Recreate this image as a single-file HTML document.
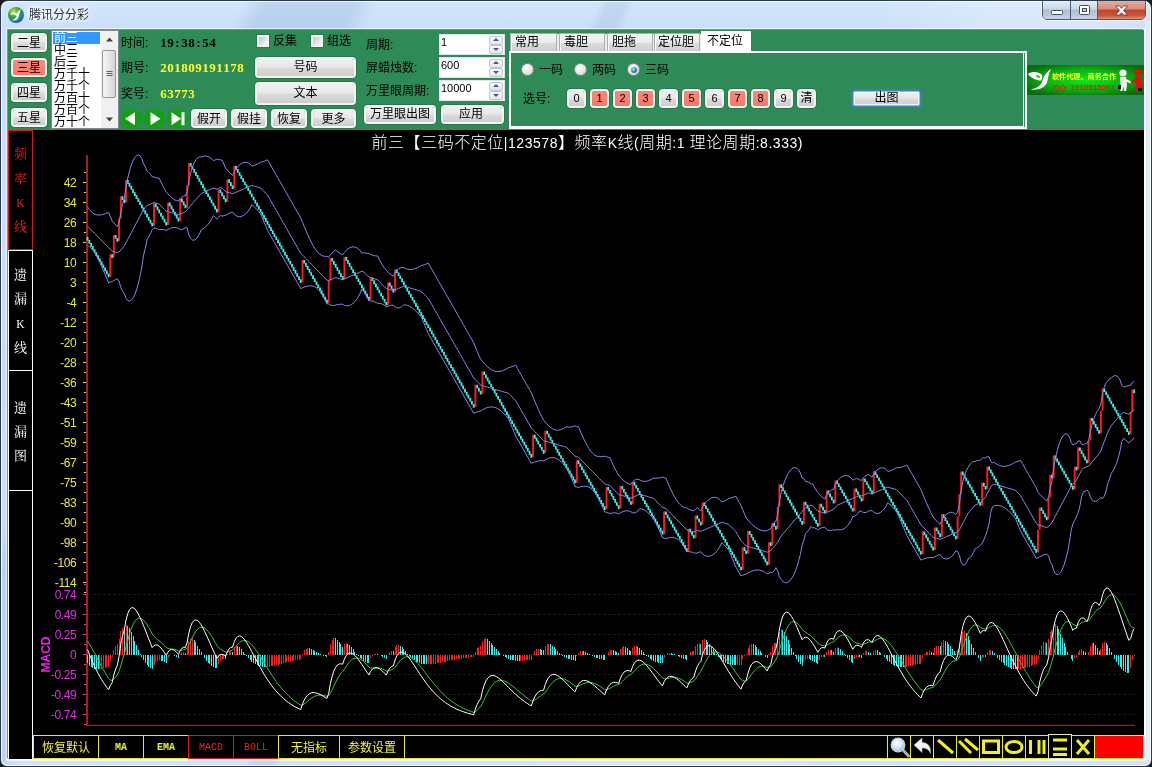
<!DOCTYPE html>
<html lang="zh-CN">
<head>
<meta charset="utf-8">
<title>腾讯分分彩</title>
<style>
html,body{margin:0;padding:0;}
body{width:1152px;height:767px;overflow:hidden;background:#1b1b1b;position:relative;
 font-family:"Liberation Sans","Noto Sans CJK SC",sans-serif;font-size:12px;color:#000;}
.abs,.win *{position:absolute;box-sizing:border-box;}
.win{will-change:transform;box-sizing:border-box;position:absolute;left:0;top:0;width:1152px;height:767px;border-radius:8px 8px 7px 7px;
 border:1px solid #2b3a4d;overflow:hidden;
 background:
  linear-gradient(115deg,rgba(120,160,205,0) 0,rgba(120,160,205,0) 220px,rgba(120,160,205,.24) 240px,rgba(120,160,205,.24) 322px,rgba(120,160,205,0) 342px,rgba(120,160,205,0) 543px,rgba(120,160,205,.2) 552px,rgba(120,160,205,.2) 566px,rgba(120,160,205,0) 576px,rgba(255,255,255,0) 800px,rgba(255,255,255,.22) 900px,rgba(255,255,255,.22) 1000px,rgba(255,255,255,0) 1060px),
  linear-gradient(180deg,#d3e6fb 0,#c9dff7 30px,#c7defa 400px,#d2e5fb 767px);
 box-shadow:inset 0 0 0 1px rgba(255,255,255,.85);}
.client{left:7px;top:29px;width:1136px;height:729px;background:#000;box-shadow:-1px -1px 0 0 rgba(75,95,115,.7),1px 1px 0 0 #fff,0 0 0 2px rgba(255,255,255,.6);}
.ttl{left:28px;top:5px;height:18px;line-height:18px;font-size:12px;color:#27303c;white-space:nowrap;
 text-shadow:0 0 6px #fff,0 0 6px #fff,0 0 8px #fff,0 0 3px #fff;}
.cap{left:1041px;top:-1px;width:104px;height:20px;border:1px solid #4c5b70;border-radius:0 0 5px 5px;overflow:hidden;
 box-shadow:0 0 0 1px rgba(255,255,255,.6);}
.cap div{top:0;height:18px;}
.cmin{left:0;width:28px;border-right:1px solid #4c5b70;background:linear-gradient(180deg,#e4edf7 0,#c9d7e8 45%,#aebfd4 50%,#c3d2e3 100%);}
.cmax{left:28px;width:27px;border-right:1px solid #4c5b70;background:linear-gradient(180deg,#e4edf7 0,#c9d7e8 45%,#aebfd4 50%,#c3d2e3 100%);}
.ccls{left:55px;width:47px;background:linear-gradient(180deg,#e4ada0 0,#d88b7a 45%,#c0432d 50%,#c8553e 80%,#dc8f78 100%);}
.green{left:7px;top:29px;width:1136px;height:100px;background:#2e8b57;}
.btn{border:2px solid #f3f3f3;border-radius:4px;text-align:center;font-size:12px;white-space:nowrap;
 background:linear-gradient(180deg,#f0f0f0 0,#e8e8e8 45%,#dadada 55%,#cecece 100%);background-clip:padding-box;
 box-shadow:0 0 0 1px rgba(30,70,50,.28);color:#000;}
.btn.sal{background:linear-gradient(180deg,#fb8677 0,#fa8072 60%,#f47868 100%);background-clip:padding-box;}
.lbl{white-space:nowrap;font-size:12px;line-height:14px;color:#000;}
.num{font-family:"Liberation Serif","Noto Serif CJK SC",serif;font-weight:bold;font-size:13px;line-height:14px;white-space:nowrap;height:14px;}
.num b{position:static;display:inline-block;width:7px;text-align:center;}
.list{left:50px;top:29px;width:68px;height:99px;background:#fff;border:1px solid #7b8a92;overflow:hidden;}
.list .it{left:1px;width:47px;height:12px;line-height:12px;font-size:12px;padding-left:1px;white-space:nowrap;}
.chk{width:12px;height:12px;border:2px solid #f1f1f1;background:linear-gradient(135deg,#c4c8cc,#eef0f2 80%);box-shadow:0 0 0 1px rgba(30,70,50,.25);}
.spin{width:66px;height:21px;background:#fff;border:1px solid #dfe5e8;font-size:11px;line-height:15px;padding-left:1px;}
.spin i{right:1px;width:14px;height:9px;border:1px solid #c0c4cc;border-radius:2px;background:linear-gradient(#fafafa,#e4e6ea);}
.spin i.u{top:1px}.spin i.d{top:10px}
.spin i:after{content:"";position:absolute;left:3px;border:3px solid transparent;}
.spin i.u:after{top:-2px;border-bottom-color:#3a5a9a;}
.spin i.d:after{top:2px;border-top-color:#3a5a9a;}
.tab{top:32px;height:18px;border:1px solid #a9b0ad;border-bottom:none;box-shadow:inset 1px 1px 0 #fafafa;font-size:12px;line-height:17px;padding-left:4px;white-space:nowrap;
 background:linear-gradient(180deg,#f4f4f4 0,#ebebeb 50%,#dcdcdc 52%,#cfcfcf 100%);}
.tab.sel{top:30px;height:21px;background:#fff;border-color:#fff;line-height:19px;padding-left:5px;box-shadow:none;}
.panel{left:508px;top:50px;width:518px;height:78px;border:2px solid #fff;background:#2e8b57;}
.radio{width:13px;height:13px;border-radius:50%;border:1px solid #8e8f8f;background:radial-gradient(circle at 40% 35%,#fdfdfd 0,#e4e4e4 55%,#c8c8c8 100%);}
.radio.on:after{content:"";position:absolute;left:2.5px;top:2.5px;width:6px;height:6px;border-radius:50%;background:radial-gradient(circle at 40% 35%,#a8e4f4 0,#2a7fb5 55%,#184c7e 100%);}
.nb{top:88px;width:19px;height:19px;line-height:15px;font-size:11px;}
.ltab{left:7px;width:25px;height:120px;border:1px solid #fff;border-left-color:#fff;color:#fff;
 font-family:"Liberation Serif","Noto Serif CJK SC",serif;font-size:13px;text-align:center;}
.ltab span{left:0;width:23px;height:14px;line-height:14px;}
.ltab.red{border-color:#c81e1e;color:#f02020;}
.tb{top:734px;height:24px;border:1px solid #e6e640;color:#f0f040;text-align:center;line-height:24px;font-size:12px;white-space:nowrap;}
.tb.ser{font-family:"Liberation Mono",monospace;font-size:10px;font-weight:bold;line-height:23px;}
.tb.red{border-color:#e01818;color:#f02020;font-weight:normal;}
.ic{top:735px;width:24px;height:24px;border:1px solid #e6e640;}
svg text.yl{font-family:"Liberation Sans",sans-serif;font-size:12px;letter-spacing:-.45px;fill:#e8e838;}
svg text.ml{font-family:"Liberation Sans",sans-serif;font-size:12px;letter-spacing:-.45px;fill:#e030e0;}
svg text.macd{font-family:"Liberation Sans",sans-serif;font-size:12px;font-weight:bold;fill:#f020f0;}
svg text.ct{font-family:"Liberation Sans","Noto Sans CJK SC",sans-serif;font-size:16px;font-weight:300;fill:#fff;}
svg text.ct .la{font-size:14px;font-weight:400;}
</style>
</head>
<body>
<div class="win">
 <!-- title bar -->
 <svg style="left:6px;top:5px" width="18" height="18" viewBox="0 0 18 18">
  <defs><radialGradient id="ig" cx="35%" cy="30%" r="75%"><stop offset="0" stop-color="#b6e86a"/><stop offset=".45" stop-color="#3aa82a"/><stop offset=".8" stop-color="#1f78b8"/><stop offset="1" stop-color="#155a96"/></radialGradient></defs>
  <circle cx="9" cy="9" r="8" fill="url(#ig)"/>
  <path d="M3 8.5C5 6 8 6 9.5 8C10.5 5.5 12 4 14 3.5C12.5 6 12.5 9 11.5 11.5C10.5 14 7.5 15 5 14C7.5 13.5 9 12 9.5 10C8 8.5 5.5 8 3 8.5Z" fill="#fff"/>
 </svg>
 <div class="ttl">腾讯分分彩</div>
 <div class="cap">
  <div class="cmin"><svg style="left:0;top:0" width="28" height="18"><rect x="8.5" y="9.5" width="11" height="4" rx="1" fill="#fff" stroke="#3e4c60"/></svg></div>
  <div class="cmax"><svg style="left:0;top:0" width="27" height="18"><rect x="8.5" y="4.5" width="10" height="9" rx="1" fill="#fff" stroke="#3e4c60"/><rect x="11.5" y="7.5" width="4" height="3" fill="#c3d0e0" stroke="#3e4c60"/></svg></div>
  <div class="ccls"><svg style="left:0;top:0" width="47" height="18"><path d="M17.500 5h4l2 2.300l2-2.300h4l-4 4.500l4 4.500h-4l-2-2.300l-2 2.300h-4l4-4.500z" fill="#fff" stroke="#5a3030" stroke-width=".8"/></svg></div>
 </div>

 <div style="left:1144px;top:20px;width:6px;height:739px;background:rgba(255,255,255,.38)"></div>
 <div class="client"></div>
 <div class="green"></div>

 <!-- star buttons -->
 <div class="btn" style="left:10px;top:32px;width:36px;height:19px;line-height:16px">二星</div>
 <div class="btn sal" style="left:10px;top:57px;width:36px;height:19px;line-height:16px">三星</div>
 <div class="btn" style="left:10px;top:82px;width:36px;height:19px;line-height:16px">四星</div>
 <div class="btn" style="left:10px;top:107px;width:36px;height:19px;line-height:16px">五星</div>

 <!-- listbox -->
 <div class="list">
  <div class="it" style="top:1px;background:#3399ff;color:#fff">前三</div>
  <div class="it" style="top:13px">中三</div>
  <div class="it" style="top:25px">后三</div>
  <div class="it" style="top:37px">万千十</div>
  <div class="it" style="top:49px">万千个</div>
  <div class="it" style="top:61px">万百十</div>
  <div class="it" style="top:73px">万百个</div>
  <div class="it" style="top:85px">万十个</div>
  <div style="left:49px;top:0;width:17px;height:97px;background:#f0f0f0"></div>
  <div style="left:50px;top:19px;width:14px;height:48px;border:1px solid #979797;border-radius:2px;background:linear-gradient(90deg,#f6f6f6 0,#e6e6e6 50%,#d2d2d2 100%)"></div>
  <svg style="left:49px;top:0" width="17" height="97"><path d="M5 10.5l3.5-4l3.5 4z M5 86.5l3.5 4l3.5-4z" fill="#404040"/><path d="M5.5 40.5h6M5.5 42.5h6M5.5 44.5h6" stroke="#606060"/></svg>
 </div>

 <!-- info labels -->
 <div class="lbl" style="left:120px;top:35px">时间:</div>
 <div class="num" style="left:159px;top:35px;color:#000"><b>1</b><b>9</b><b>:</b><b>3</b><b>8</b><b>:</b><b>5</b><b>4</b></div>
 <div class="lbl" style="left:120px;top:60px">期号:</div>
 <div class="num" style="left:159px;top:60px;color:#ffff30"><b>2</b><b>0</b><b>1</b><b>8</b><b>0</b><b>9</b><b>1</b><b>9</b><b>1</b><b>1</b><b>7</b><b>8</b></div>
 <div class="lbl" style="left:120px;top:86px">奖号:</div>
 <div class="num" style="left:159px;top:86px;color:#ffff30"><b>6</b><b>3</b><b>7</b><b>7</b><b>3</b></div>

 <svg style="left:118px;top:106px" width="72" height="24" viewBox="119 107 72 24">
  <circle cx="131.5" cy="118.7" r="10.3" fill="#10a010"/><circle cx="154.5" cy="118.7" r="10.3" fill="#10a010"/><circle cx="177.5" cy="118.7" r="10.3" fill="#10a010"/>
  <path d="M125 118.7l10-6.5v13z M160.5 118.7l-10-6.5v13z M181 118.7l-9.5-6.5v13z M181.5 112.2h3v13h-3z" fill="#fff"/>
 </svg>
 <div class="btn" style="left:190px;top:108px;width:36px;height:19px;line-height:16px">假开</div>
 <div class="btn" style="left:230px;top:108px;width:36px;height:19px;line-height:16px">假挂</div>
 <div class="btn" style="left:270px;top:108px;width:36px;height:19px;line-height:16px">恢复</div>
 <div class="btn" style="left:310px;top:108px;width:45px;height:19px;line-height:16px">更多</div>

 <div class="chk" style="left:256px;top:34px"></div><div class="lbl" style="left:272px;top:33px">反集</div>
 <div class="chk" style="left:310px;top:34px"></div><div class="lbl" style="left:326px;top:33px">组选</div>
 <div class="btn" style="left:254px;top:56px;width:101px;height:21px;line-height:17px">号码</div>
 <div class="btn" style="left:254px;top:81px;width:101px;height:23px;line-height:19px">文本</div>

 <div class="lbl" style="left:365px;top:37px">周期:</div>
 <div class="lbl" style="left:365px;top:60px">屏蜡烛数:</div>
 <div class="lbl" style="left:365px;top:83px">万里眼周期:</div>
 <div class="spin" style="left:438px;top:33px">1<i class="u"></i><i class="d"></i></div>
 <div class="spin" style="left:438px;top:56px">600<i class="u"></i><i class="d"></i></div>
 <div class="spin" style="left:438px;top:79px">10000<i class="u"></i><i class="d"></i></div>
 <div class="btn" style="left:363px;top:104px;width:72px;height:19px;line-height:15px">万里眼出图</div>
 <div class="btn" style="left:440px;top:104px;width:63px;height:19px;line-height:15px;padding-right:3px">应用</div>

 <!-- tab control -->
 <div style="left:509px;top:33px;width:192px;height:18px;background:#ececec"></div>
 <div class="panel"></div>
 <div style="left:1022px;top:51px;width:1px;height:75px;background:#fff"></div><div style="left:509px;top:125px;width:514px;height:1px;background:#fff"></div>
 <div class="tab" style="left:509px;width:47px">常用</div>
 <div class="tab" style="left:558px;width:46px">毒胆</div>
 <div class="tab" style="left:606px;width:46px">胆拖</div>
 <div class="tab" style="left:653px;width:46px;padding-left:3px">定位胆</div>
 <div class="tab sel" style="left:700px;width:50px">不定位</div>
 <div class="radio" style="left:520px;top:62px"></div><div class="lbl" style="left:538px;top:62px">一码</div>
 <div class="radio" style="left:573px;top:62px"></div><div class="lbl" style="left:591px;top:62px">两码</div>
 <div class="radio on" style="left:626px;top:62px"></div><div class="lbl" style="left:644px;top:62px">三码</div>
 <div class="lbl" style="left:522px;top:91px">选号:</div>
 <div class="btn nb" style="left:566px">0</div>
 <div class="btn nb sal" style="left:589px">1</div>
 <div class="btn nb sal" style="left:612px">2</div>
 <div class="btn nb sal" style="left:635px">3</div>
 <div class="btn nb" style="left:658px">4</div>
 <div class="btn nb sal" style="left:681px">5</div>
 <div class="btn nb" style="left:704px">6</div>
 <div class="btn nb sal" style="left:727px">7</div>
 <div class="btn nb sal" style="left:750px">8</div>
 <div class="btn nb" style="left:773px">9</div>
 <div class="btn nb" style="left:796px;font-size:12px">清</div>
 <div class="btn" style="left:850px;top:88px;width:71px;height:19px;line-height:15px;border-color:#3c7fb1;box-shadow:inset 0 0 0 1px #6fd0f0,inset 0 0 0 2px rgba(255,255,255,.7)">出图</div>

 <!-- banner -->
 <svg style="left:1026px;top:64px" width="117" height="30" viewBox="0 0 117 30">
  <defs><radialGradient id="bg" cx="50%" cy="50%" r="60%"><stop offset="0" stop-color="#10e818"/><stop offset=".55" stop-color="#0cb414"/><stop offset="1" stop-color="#086c0c"/></radialGradient></defs>
  <rect width="117" height="30" fill="url(#bg)"/>
  <path d="M1 9C5 6.300 11 6.300 15 10C15.500 12 15 14 14 15.500C9 15.500 4 13 1 9Z" fill="#fff"/>
  <path d="M8.500 10.300C10.500 9.800 12.500 10.600 13.500 12.400C11.500 13.200 9.500 12.500 8.500 10.300Z" fill="#2aa02a"/>
  <path d="M24.500 4C21 8 21.500 14 19.500 18.500C17.500 23 11 25.500 3.500 24.500C9 23.500 13.500 21 15 17C16.500 12 19 6.500 24.500 4Z" fill="#fff"/>
  <text x="25" y="13.5" font-family="'Liberation Sans','Noto Sans CJK SC',sans-serif" font-size="7" font-weight="bold" fill="#ffff20" textLength="64" lengthAdjust="spacingAndGlyphs">软件代理、商务合作</text>
  <text x="26" y="24.5" font-family="'Liberation Sans',sans-serif" font-size="7" font-weight="bold" fill="#c03010" textLength="62" lengthAdjust="spacingAndGlyphs">QQ: 1910515001</text>
  <g fill="#f2f2f2"><circle cx="96" cy="8" r="3.6"/><path d="M93 12h6l1 8l-1 6h-2l-.5-5l-1 5h-2l0-7z"/><path d="M99 14l6 3l-.6 1.6l-6-2z"/></g>
  <path d="M91 20h3v4h-3z" fill="#111"/>
  <g fill="#e01010"><circle cx="111" cy="7.5" r="3.6"/><path d="M108 11.5h6.5l1 8l-1 7h-2.2l-.5-5l-1 5h-2.2l.2-7z"/><path d="M108.5 13.5l-5 3.5l.8 1.5l5.2-2.6z"/></g>
  <path d="M111 23h4v3h-4z" fill="#111"/>
 </svg>

 <!-- left vertical tabs -->
 <div class="ltab red" style="top:129px;height:120px"><span style="top:15.5px">频</span><span style="top:40.5px">率</span><span style="top:64.5px;font-size:11.5px">K</span><span style="top:88.5px">线</span></div>
 <div class="ltab" style="top:249px;height:121px"><span style="top:16.5px">遗</span><span style="top:40.5px">漏</span><span style="top:65.5px;font-size:11.5px">K</span><span style="top:89.5px">线</span></div>
 <div class="ltab" style="top:369px;height:121px"><span style="top:29.5px">遗</span><span style="top:53.5px">漏</span><span style="top:77.5px">图</span></div>
 <div style="left:7px;top:489px;width:1px;height:270px;background:#fff"></div>
 <div style="left:31px;top:489px;width:1px;height:270px;background:#fff"></div>

 <!-- chart -->
 <svg style="left:-1px;top:-1px" width="1152" height="767" viewBox="0 0 1152 767">
  <text x="371.5" y="147.6" class="ct" textLength="431" lengthAdjust="spacing">前三【三码不定位<tspan class="la">|123578</tspan>】频率<tspan class="la">K</tspan>线<tspan class="la">(</tspan>周期<tspan class="la">:1 </tspan>理论周期<tspan class="la">:8.333)</tspan></text>
<path d="M87 155V725.6" stroke="#bc2222" stroke-width="1.8" fill="none"/><path d="M86.1 725.2H1135" stroke="#d02222" stroke-width="1.1" fill="none"/>
<text x="76.2" y="186.8" text-anchor="end" class="yl">42</text>
<text x="76.2" y="206.8" text-anchor="end" class="yl">34</text>
<text x="76.2" y="226.8" text-anchor="end" class="yl">26</text>
<text x="76.2" y="246.8" text-anchor="end" class="yl">18</text>
<text x="76.2" y="266.8" text-anchor="end" class="yl">10</text>
<text x="76.2" y="286.8" text-anchor="end" class="yl">3</text>
<text x="76.2" y="306.8" text-anchor="end" class="yl">-4</text>
<text x="76.2" y="326.8" text-anchor="end" class="yl">-12</text>
<text x="76.2" y="346.8" text-anchor="end" class="yl">-20</text>
<text x="76.2" y="366.8" text-anchor="end" class="yl">-28</text>
<text x="76.2" y="386.8" text-anchor="end" class="yl">-36</text>
<text x="76.2" y="406.8" text-anchor="end" class="yl">-43</text>
<text x="76.2" y="426.8" text-anchor="end" class="yl">-51</text>
<text x="76.2" y="446.8" text-anchor="end" class="yl">-59</text>
<text x="76.2" y="466.8" text-anchor="end" class="yl">-67</text>
<text x="76.2" y="486.8" text-anchor="end" class="yl">-75</text>
<text x="76.2" y="506.8" text-anchor="end" class="yl">-83</text>
<text x="76.2" y="526.8" text-anchor="end" class="yl">-90</text>
<text x="76.2" y="546.8" text-anchor="end" class="yl">-98</text>
<text x="76.2" y="566.8" text-anchor="end" class="yl">-106</text>
<text x="76.2" y="586.8" text-anchor="end" class="yl">-114</text>
<path d="M83 182.5H86M84 192.5H86M83 202.5H86M84 212.5H86M83 222.5H86M84 232.5H86M83 242.5H86M84 252.5H86M83 262.5H86M84 272.5H86M83 282.5H86M84 292.5H86M83 302.5H86M84 312.5H86M83 322.5H86M84 332.5H86M83 342.5H86M84 352.5H86M83 362.5H86M84 372.5H86M83 382.5H86M84 392.5H86M83 402.5H86M84 412.5H86M83 422.5H86M84 432.5H86M83 442.5H86M84 452.5H86M83 462.5H86M84 472.5H86M83 482.5H86M84 492.5H86M83 502.5H86M84 512.5H86M83 522.5H86M84 532.5H86M83 542.5H86M84 552.5H86M83 562.5H86M84 572.5H86M83 582.5H86M84 592.5H86M84 172.5H86" stroke="#e6e620" stroke-width="1"/>
<text x="76.2" y="598.8" text-anchor="end" class="ml">0.74</text>
<text x="76.2" y="618.8" text-anchor="end" class="ml">0.49</text>
<text x="76.2" y="638.8" text-anchor="end" class="ml">0.25</text>
<text x="76.2" y="658.8" text-anchor="end" class="ml">0</text>
<text x="76.2" y="678.8" text-anchor="end" class="ml">-0.25</text>
<text x="76.2" y="698.8" text-anchor="end" class="ml">-0.49</text>
<text x="76.2" y="718.8" text-anchor="end" class="ml">-0.74</text>
<path d="M83 594.5H86M84 604.5H86M84 584.5H86M83 614.5H86M84 624.5H86M83 634.5H86M84 644.5H86M83 654.5H86M84 664.5H86M83 674.5H86M84 684.5H86M83 694.5H86M84 704.5H86M83 714.5H86M84 724.5H86" stroke="#e030e0" stroke-width="1"/>
<path d="M88 594.5H1135M88 614.5H1135M88 634.5H1135M88 654.5H1135M88 674.5H1135M88 694.5H1135M88 714.5H1135" stroke="#181818" stroke-width="1" stroke-dasharray="3 2"/>
<text transform="translate(50,654.5) rotate(-90)" text-anchor="middle" class="macd">MACD</text>
<path d="M110.3 276.7V254.3M113.8 257.4V235.0M119.0 241.1V218.7M120.8 218.7V196.3M126.0 202.4V180.0M154.0 225.9V203.5M168.0 224.9V202.5M180.2 220.9V198.5M187.2 207.7V185.3M188.9 185.3V162.9M218.6 211.8V189.4M227.4 201.7V179.3M234.3 188.5V166.1M302.5 282.3V259.9M328.7 302.8V280.4M330.4 280.4V258.0M344.4 279.4V257.0M370.6 299.8V277.4M388.1 305.0V282.6M395.1 291.8V269.4M475.4 407.1V384.7M482.4 393.8V371.4M533.1 457.1V434.7M545.3 453.1V430.7M576.8 482.7V460.3M606.5 509.3V486.9M620.4 508.3V485.9M632.7 504.2V481.8M664.1 533.9V511.5M688.6 551.2V528.8M695.6 538.0V515.6M702.5 524.8V502.4M742.7 569.7V547.3M748.0 553.4V531.0M768.9 564.7V542.3M772.4 545.4V523.0M777.7 529.1V506.7M779.4 506.7V484.3M803.9 524.1V501.7M819.6 526.1V503.7M826.6 512.9V490.5M835.3 502.8V480.4M854.5 511.0V488.6M863.3 500.8V478.4M873.8 493.7V471.3M922.7 553.9V531.5M934.9 549.9V527.5M941.9 536.7V514.3M957.6 538.7V516.3M959.4 516.3V493.9M961.1 493.9V471.5M982.1 505.2V482.8M987.3 488.9V466.5M1038.0 552.2V529.8M1039.7 529.8V507.4M1048.5 519.6V497.2M1050.2 497.2V474.8M1053.7 477.9V455.5M1074.7 489.2V466.8M1078.1 469.8V447.4M1088.6 462.7V440.3M1090.4 440.3V417.9M1100.9 433.2V410.8M1102.6 410.8V388.4M1130.6 434.3V411.9M1132.3 411.9V389.5" stroke="#ff1c1c" stroke-width="1.9" fill="none"/>
<path d="M87.6 236.9V240.6M89.3 240.0V243.7M91.1 243.1V246.7M92.8 246.1V249.8M94.6 249.2V252.8M96.3 252.2V255.9M98.1 255.3V259.0M99.8 258.4V262.0M101.6 261.4V265.1M103.3 264.5V268.1M105.1 267.5V271.2M106.8 270.6V274.3M108.6 273.7V277.3M112.1 254.3V258.0M115.6 235.0V238.6M117.3 238.0V241.7M122.5 196.3V200.0M124.3 199.4V203.0M127.8 180.0V183.7M129.5 183.1V186.7M131.3 186.1V189.8M133.0 189.2V192.9M134.8 192.3V195.9M136.5 195.3V199.0M138.3 198.4V202.0M140.0 201.4V205.1M141.8 204.5V208.2M143.5 207.6V211.2M145.3 210.6V214.3M147.0 213.7V217.3M148.7 216.7V220.4M150.5 219.8V223.5M152.2 222.9V226.5M155.7 203.5V207.2M157.5 206.6V210.2M159.2 209.6V213.3M161.0 212.7V216.4M162.7 215.8V219.4M164.5 218.8V222.5M166.2 221.9V225.5M169.7 202.5V206.2M171.5 205.6V209.3M173.2 208.7V212.3M174.9 211.7V215.4M176.7 214.8V218.4M178.4 217.8V221.5M181.9 198.5V202.2M183.7 201.6V205.2M185.4 204.6V208.3M190.7 162.9V166.5M192.4 165.9V169.6M194.2 169.0V172.7M195.9 172.1V175.7M197.7 175.1V178.8M199.4 178.2V181.8M201.2 181.2V184.9M202.9 184.3V188.0M204.6 187.4V191.0M206.4 190.4V194.1M208.1 193.5V197.1M209.9 196.5V200.2M211.6 199.6V203.3M213.4 202.7V206.3M215.1 205.7V209.4M216.9 208.8V212.4M220.4 189.4V193.1M222.1 192.5V196.2M223.9 195.6V199.2M225.6 198.6V202.3M229.1 179.3V182.9M230.9 182.3V186.0M232.6 185.4V189.1M236.1 166.1V169.7M237.8 169.1V172.8M239.6 172.2V175.8M241.3 175.2V178.9M243.1 178.3V182.0M244.8 181.4V185.0M246.6 184.4V188.1M248.3 187.5V191.1M250.1 190.5V194.2M251.8 193.6V197.3M253.6 196.7V200.3M255.3 199.7V203.4M257.1 202.8V206.4M258.8 205.8V209.5M260.6 208.9V212.6M262.3 212.0V215.6M264.0 215.0V218.7M265.8 218.1V221.7M267.5 221.1V224.8M269.3 224.2V227.9M271.0 227.3V230.9M272.8 230.3V234.0M274.5 233.4V237.0M276.3 236.4V240.1M278.0 239.5V243.2M279.8 242.6V246.2M281.5 245.6V249.3M283.3 248.7V252.3M285.0 251.7V255.4M286.8 254.8V258.5M288.5 257.9V261.5M290.3 260.9V264.6M292.0 264.0V267.6M293.7 267.0V270.7M295.5 270.1V273.8M297.2 273.2V276.8M299.0 276.2V279.9M300.7 279.3V282.9M304.2 259.9V263.6M306.0 263.0V266.7M307.7 266.1V269.7M309.5 269.1V272.8M311.2 272.2V275.8M313.0 275.2V278.9M314.7 278.3V282.0M316.5 281.4V285.0M318.2 284.4V288.1M320.0 287.5V291.1M321.7 290.5V294.2M323.4 293.6V297.3M325.2 296.7V300.3M326.9 299.7V303.4M332.2 258.0V261.6M333.9 261.0V264.7M335.7 264.1V267.8M337.4 267.2V270.8M339.2 270.2V273.9M340.9 273.3V276.9M342.7 276.3V280.0M346.2 257.0V260.7M347.9 260.1V263.7M349.6 263.1V266.8M351.4 266.2V269.8M353.1 269.2V272.9M354.9 272.3V276.0M356.6 275.4V279.0M358.4 278.4V282.1M360.1 281.5V285.1M361.9 284.5V288.2M363.6 287.6V291.3M365.4 290.7V294.3M367.1 293.7V297.4M368.9 296.8V300.4M372.4 277.4V281.1M374.1 280.5V284.2M375.9 283.6V287.2M377.6 286.6V290.3M379.3 289.7V293.3M381.1 292.7V296.4M382.8 295.8V299.5M384.6 298.9V302.5M386.3 301.9V305.6M389.8 282.6V286.2M391.6 285.6V289.3M393.3 288.7V292.4M396.8 269.4V273.0M398.6 272.4V276.1M400.3 275.5V279.1M402.1 278.5V282.2M403.8 281.6V285.3M405.6 284.7V288.3M407.3 287.7V291.4M409.0 290.8V294.4M410.8 293.8V297.5M412.5 296.9V300.6M414.3 300.0V303.6M416.0 303.0V306.7M417.8 306.1V309.7M419.5 309.1V312.8M421.3 312.2V315.9M423.0 315.3V318.9M424.8 318.3V322.0M426.5 321.4V325.0M428.3 324.4V328.1M430.0 327.5V331.2M431.8 330.6V334.2M433.5 333.6V337.3M435.3 336.7V340.3M437.0 339.7V343.4M438.7 342.8V346.5M440.5 345.9V349.5M442.2 348.9V352.6M444.0 352.0V355.6M445.7 355.0V358.7M447.5 358.1V361.8M449.2 361.2V364.8M451.0 364.2V367.9M452.7 367.3V370.9M454.5 370.3V374.0M456.2 373.4V377.1M458.0 376.5V380.1M459.7 379.5V383.2M461.5 382.6V386.2M463.2 385.6V389.3M465.0 388.7V392.4M466.7 391.8V395.4M468.4 394.8V398.5M470.2 397.9V401.5M471.9 400.9V404.6M473.7 404.0V407.7M477.2 384.7V388.3M478.9 387.7V391.4M480.7 390.8V394.4M484.2 371.4V375.1M485.9 374.5V378.2M487.7 377.6V381.2M489.4 380.6V384.3M491.2 383.7V387.3M492.9 386.7V390.4M494.7 389.8V393.5M496.4 392.9V396.5M498.1 395.9V399.6M499.9 399.0V402.6M501.6 402.0V405.7M503.4 405.1V408.8M505.1 408.2V411.8M506.9 411.2V414.9M508.6 414.3V417.9M510.4 417.3V421.0M512.1 420.4V424.1M513.9 423.5V427.1M515.6 426.5V430.2M517.4 429.6V433.2M519.1 432.6V436.3M520.9 435.7V439.4M522.6 438.8V442.4M524.4 441.8V445.5M526.1 444.9V448.5M527.8 447.9V451.6M529.6 451.0V454.7M531.3 454.1V457.7M534.8 434.7V438.4M536.6 437.8V441.4M538.3 440.8V444.5M540.1 443.9V447.6M541.8 447.0V450.6M543.6 450.0V453.7M547.1 430.7V434.3M548.8 433.7V437.4M550.6 436.8V440.5M552.3 439.9V443.5M554.0 442.9V446.6M555.8 446.0V449.6M557.5 449.0V452.7M559.3 452.1V455.8M561.0 455.2V458.8M562.8 458.2V461.9M564.5 461.3V464.9M566.3 464.3V468.0M568.0 467.4V471.1M569.8 470.5V474.1M571.5 473.5V477.2M573.3 476.6V480.2M575.0 479.6V483.3M578.5 460.3V464.0M580.3 463.4V467.0M582.0 466.4V470.1M583.7 469.5V473.1M585.5 472.5V476.2M587.2 475.6V479.3M589.0 478.7V482.3M590.7 481.7V485.4M592.5 484.8V488.4M594.2 487.8V491.5M596.0 490.9V494.6M597.7 494.0V497.6M599.5 497.0V500.7M601.2 500.1V503.7M603.0 503.1V506.8M604.7 506.2V509.9M608.2 486.9V490.5M610.0 489.9V493.6M611.7 493.0V496.6M613.4 496.0V499.7M615.2 499.1V502.8M616.9 502.2V505.8M618.7 505.2V508.9M622.2 485.9V489.5M623.9 488.9V492.6M625.7 492.0V495.7M627.4 495.1V498.7M629.2 498.1V501.8M630.9 501.2V504.8M634.4 481.8V485.5M636.2 484.9V488.6M637.9 488.0V491.6M639.7 491.0V494.7M641.4 494.1V497.7M643.1 497.1V500.8M644.9 500.2V503.9M646.6 503.3V506.9M648.4 506.3V510.0M650.1 509.4V513.0M651.9 512.4V516.1M653.6 515.5V519.2M655.4 518.6V522.2M657.1 521.6V525.3M658.9 524.7V528.3M660.6 527.7V531.4M662.4 530.8V534.5M665.9 511.5V515.1M667.6 514.5V518.2M669.4 517.6V521.2M671.1 520.6V524.3M672.8 523.7V527.4M674.6 526.8V530.4M676.3 529.8V533.5M678.1 532.9V536.5M679.8 535.9V539.6M681.6 539.0V542.7M683.3 542.1V545.7M685.1 545.1V548.8M686.8 548.2V551.8M690.3 528.8V532.5M692.1 531.9V535.6M693.8 535.0V538.6M697.3 515.6V519.3M699.1 518.7V522.3M700.8 521.7V525.4M704.3 502.4V506.1M706.0 505.5V509.1M707.8 508.5V512.2M709.5 511.6V515.2M711.3 514.6V518.3M713.0 517.7V521.4M714.8 520.8V524.4M716.5 523.8V527.5M718.3 526.9V530.5M720.0 529.9V533.6M721.8 533.0V536.7M723.5 536.1V539.7M725.3 539.1V542.8M727.0 542.2V545.8M728.7 545.2V548.9M730.5 548.3V552.0M732.2 551.4V555.0M734.0 554.4V558.1M735.7 557.5V561.1M737.5 560.5V564.2M739.2 563.6V567.3M741.0 566.7V570.3M744.5 547.3V551.0M746.2 550.4V554.0M749.7 531.0V534.7M751.5 534.1V537.8M753.2 537.2V540.8M755.0 540.2V543.9M756.7 543.3V546.9M758.4 546.3V550.0M760.2 549.4V553.1M761.9 552.5V556.1M763.7 555.5V559.2M765.4 558.6V562.2M767.2 561.6V565.3M770.7 542.3V546.0M774.2 523.0V526.6M775.9 526.0V529.7M781.2 484.3V487.9M782.9 487.3V491.0M784.7 490.4V494.1M786.4 493.5V497.1M788.1 496.5V500.2M789.9 499.6V503.2M791.6 502.6V506.3M793.4 505.7V509.4M795.1 508.8V512.4M796.9 511.8V515.5M798.6 514.9V518.5M800.4 517.9V521.6M802.1 521.0V524.7M805.6 501.7V505.3M807.4 504.7V508.4M809.1 507.8V511.4M810.9 510.8V514.5M812.6 513.9V517.6M814.4 517.0V520.6M816.1 520.0V523.7M817.8 523.1V526.7M821.3 503.7V507.4M823.1 506.8V510.5M824.8 509.9V513.5M828.3 490.5V494.2M830.1 493.6V497.2M831.8 496.6V500.3M833.6 499.7V503.4M837.1 480.4V484.0M838.8 483.4V487.1M840.6 486.5V490.1M842.3 489.5V493.2M844.1 492.6V496.3M845.8 495.7V499.3M847.5 498.7V502.4M849.3 501.8V505.4M851.0 504.8V508.5M852.8 507.9V511.6M856.3 488.6V492.2M858.0 491.6V495.3M859.8 494.7V498.3M861.5 497.7V501.4M865.0 478.4V482.1M866.8 481.5V485.1M868.5 484.5V488.2M870.3 487.6V491.2M872.0 490.6V494.3M875.5 471.3V475.0M877.2 474.4V478.0M879.0 477.4V481.1M880.7 480.5V484.1M882.5 483.5V487.2M884.2 486.6V490.3M886.0 489.7V493.3M887.7 492.7V496.4M889.5 495.8V499.4M891.2 498.8V502.5M893.0 501.9V505.6M894.7 505.0V508.6M896.5 508.0V511.7M898.2 511.1V514.7M900.0 514.1V517.8M901.7 517.2V520.9M903.4 520.3V523.9M905.2 523.3V527.0M906.9 526.4V530.0M908.7 529.4V533.1M910.4 532.5V536.2M912.2 535.6V539.2M913.9 538.6V542.3M915.7 541.7V545.3M917.4 544.7V548.4M919.2 547.8V551.5M920.9 550.9V554.5M924.4 531.5V535.2M926.2 534.6V538.2M927.9 537.6V541.3M929.7 540.7V544.4M931.4 543.8V547.4M933.1 546.8V550.5M936.6 527.5V531.1M938.4 530.5V534.2M940.1 533.6V537.3M943.6 514.3V517.9M945.4 517.3V521.0M947.1 520.4V524.0M948.9 523.4V527.1M950.6 526.5V530.2M952.4 529.6V533.2M954.1 532.6V536.3M955.9 535.7V539.3M962.8 471.5V475.2M964.6 474.6V478.3M966.3 477.7V481.3M968.1 480.7V484.4M969.8 483.8V487.4M971.6 486.8V490.5M973.3 489.9V493.6M975.1 493.0V496.6M976.8 496.0V499.7M978.6 499.1V502.7M980.3 502.1V505.8M983.8 482.8V486.5M985.6 485.9V489.5M989.1 466.5V470.2M990.8 469.6V473.2M992.5 472.6V476.3M994.3 475.7V479.4M996.0 478.8V482.4M997.8 481.8V485.5M999.5 484.9V488.5M1001.3 487.9V491.6M1003.0 491.0V494.7M1004.8 494.1V497.7M1006.5 497.1V500.8M1008.3 500.2V503.8M1010.0 503.2V506.9M1011.8 506.3V510.0M1013.5 509.4V513.0M1015.3 512.4V516.1M1017.0 515.5V519.1M1018.8 518.5V522.2M1020.5 521.6V525.3M1022.2 524.7V528.3M1024.0 527.7V531.4M1025.7 530.8V534.4M1027.5 533.8V537.5M1029.2 536.9V540.6M1031.0 540.0V543.6M1032.7 543.0V546.7M1034.5 546.1V549.7M1036.2 549.1V552.8M1041.5 507.4V511.1M1043.2 510.5V514.1M1045.0 513.5V517.2M1046.7 516.6V520.2M1051.9 474.8V478.5M1055.4 455.5V459.2M1057.2 458.6V462.2M1058.9 461.6V465.3M1060.7 464.7V468.3M1062.4 467.7V471.4M1064.2 470.8V474.5M1065.9 473.9V477.5M1067.7 476.9V480.6M1069.4 480.0V483.6M1071.2 483.0V486.7M1072.9 486.1V489.8M1076.4 466.8V470.4M1079.9 447.4V451.1M1081.6 450.5V454.1M1083.4 453.5V457.2M1085.1 456.6V460.3M1086.9 459.7V463.3M1092.1 417.9V421.6M1093.9 421.0V424.6M1095.6 424.0V427.7M1097.4 427.1V430.8M1099.1 430.2V433.8M1104.4 388.4V392.1M1106.1 391.5V395.1M1107.8 394.5V398.2M1109.6 397.6V401.3M1111.3 400.7V404.3M1113.1 403.7V407.4M1114.8 406.8V410.4M1116.6 409.8V413.5M1118.3 412.9V416.6M1120.1 416.0V419.6M1121.8 419.0V422.7M1123.6 422.1V425.7M1125.3 425.1V428.8M1127.1 428.2V431.9M1128.8 431.3V434.9M1134.1 389.5V393.2" stroke="#40eeee" stroke-width="1.8" fill="none"/>
<polyline points="87.6,206.9 89.3,209.4 91.1,211.5 92.8,213.0 94.6,214.1 96.3,214.7 98.1,215.0 99.8,215.0 101.6,214.8 103.3,214.3 105.1,213.8 106.8,213.1 108.6,212.4 110.3,216.7 112.1,220.9 113.8,222.9 115.6,224.9 117.3,226.6 119.0,223.0 120.8,212.6 122.5,204.6 124.3,198.3 126.0,187.0 127.8,178.1 129.5,170.9 131.3,165.2 133.0,160.8 134.8,157.6 136.5,155.6 138.3,155.0 140.0,155.9 141.8,158.6 143.5,163.9 145.3,166.7 147.0,171.2 148.7,172.5 150.5,174.3 152.2,176.8 154.0,177.0 155.7,177.6 157.5,178.0 159.2,178.2 161.0,182.1 162.7,185.6 164.5,188.9 166.2,191.9 168.0,193.9 169.7,195.8 171.5,197.5 173.2,198.9 174.9,200.0 176.7,200.7 178.4,201.0 180.2,198.5 181.9,196.9 183.7,196.0 185.4,195.9 187.2,191.4 188.9,180.3 190.7,172.8 192.4,167.2 194.2,162.9 195.9,159.8 197.7,157.8 199.4,156.8 201.2,157.0 202.9,156.4 204.6,156.1 206.4,156.2 208.1,156.6 209.9,157.4 211.6,158.7 213.4,160.6 215.1,160.0 216.9,159.2 218.6,159.3 220.4,159.9 222.1,160.2 223.9,164.2 225.6,168.0 227.4,170.1 229.1,172.1 230.9,173.9 232.6,175.5 234.3,171.7 236.1,168.8 237.8,166.5 239.6,164.8 241.3,163.5 243.1,162.7 244.8,162.3 246.6,162.4 248.3,162.9 250.1,164.1 251.8,166.0 253.6,165.6 255.3,165.0 257.1,164.2 258.8,163.3 260.6,162.2 262.3,161.8 264.0,161.3 265.8,160.6 267.5,159.8 269.3,162.9 271.0,166.0 272.8,169.0 274.5,172.1 276.3,175.1 278.0,178.2 279.8,181.3 281.5,184.3 283.3,187.4 285.0,190.4 286.8,193.5 288.5,196.6 290.3,199.6 292.0,202.7 293.7,205.7 295.5,208.8 297.2,211.9 299.0,214.9 300.7,218.0 302.5,222.3 304.2,226.5 306.0,230.7 307.7,234.7 309.5,238.5 311.2,242.1 313.0,245.4 314.7,248.3 316.5,250.8 318.2,252.8 320.0,254.4 321.7,255.4 323.4,256.1 325.2,256.4 326.9,256.3 328.7,257.3 330.4,254.7 332.2,252.7 333.9,251.1 335.7,250.0 337.4,251.5 339.2,252.8 340.9,253.9 342.7,254.9 344.4,252.4 346.2,250.4 347.9,248.9 349.6,247.8 351.4,247.1 353.1,246.8 354.9,247.0 356.6,247.6 358.4,248.8 360.1,250.6 361.9,253.5 363.6,252.5 365.4,253.1 367.1,253.4 368.9,253.4 370.6,254.4 372.4,255.1 374.1,255.6 375.9,255.9 377.6,256.0 379.3,259.6 381.1,262.9 382.8,265.8 384.6,268.3 386.3,270.3 388.1,272.2 389.8,273.8 391.6,275.2 393.3,276.2 395.1,272.9 396.8,270.5 398.6,268.8 400.3,267.8 402.1,267.3 403.8,267.5 405.6,268.4 407.3,269.1 409.0,269.4 410.8,269.5 412.5,269.3 414.3,268.9 416.0,268.3 417.8,267.5 419.5,266.6 421.3,265.5 423.0,265.1 424.8,264.6 426.5,263.9 428.3,263.1 430.0,266.2 431.8,269.3 433.5,272.3 435.3,275.4 437.0,278.4 438.7,281.5 440.5,284.6 442.2,287.6 444.0,290.7 445.7,293.7 447.5,296.8 449.2,299.9 451.0,302.9 452.7,306.0 454.5,309.0 456.2,312.1 458.0,315.2 459.7,318.2 461.5,321.3 463.2,324.3 465.0,327.4 466.7,330.5 468.4,333.5 470.2,336.6 471.9,339.6 473.7,342.7 475.4,347.0 477.2,351.3 478.9,355.4 480.7,359.4 482.4,361.5 484.2,363.4 485.9,365.3 487.7,366.9 489.4,368.3 491.2,369.5 492.9,370.5 494.7,371.1 496.4,371.5 498.1,371.6 499.9,371.4 501.6,371.0 503.4,370.4 505.1,369.6 506.9,368.7 508.6,367.6 510.4,367.2 512.1,366.6 513.9,366.0 515.6,365.2 517.4,368.3 519.1,371.3 520.9,374.4 522.6,377.5 524.4,380.5 526.1,383.6 527.8,386.6 529.6,389.7 531.3,392.8 533.1,397.1 534.8,401.3 536.6,405.5 538.3,409.4 540.1,413.3 541.8,416.8 543.6,420.1 545.3,422.2 547.1,424.2 548.8,426.0 550.6,427.5 552.3,428.7 554.0,429.6 555.8,430.1 557.5,430.3 559.3,430.1 561.0,429.6 562.8,428.8 564.5,427.9 566.3,426.8 568.0,427.1 569.8,427.1 571.5,426.9 573.3,426.4 575.0,425.9 576.8,426.5 578.5,426.9 580.3,431.0 582.0,435.0 583.7,438.8 585.5,442.4 587.2,445.7 589.0,448.6 590.7,451.2 592.5,453.2 594.2,454.7 596.0,455.8 597.7,456.4 599.5,456.7 601.2,456.7 603.0,456.5 604.7,456.1 606.5,456.8 608.2,457.3 610.0,457.6 611.7,461.6 613.4,465.4 615.2,469.0 616.9,472.3 618.7,475.2 620.4,477.3 622.2,479.2 623.9,480.8 625.7,482.2 627.4,483.3 629.2,484.0 630.9,484.4 632.7,481.9 634.4,480.3 636.2,479.4 637.9,479.2 639.7,479.9 641.4,480.8 643.1,481.3 644.9,481.4 646.6,481.2 648.4,480.7 650.1,480.0 651.9,479.1 653.6,478.0 655.4,478.3 657.1,478.2 658.9,478.0 660.6,477.6 662.4,477.0 664.1,477.6 665.9,478.1 667.6,482.2 669.4,486.2 671.1,490.0 672.8,493.6 674.6,496.9 676.3,499.8 678.1,502.3 679.8,504.3 681.6,505.9 683.3,507.0 685.1,507.6 686.8,507.9 688.6,509.0 690.3,509.9 692.1,510.5 693.8,510.9 695.6,509.0 697.3,507.6 699.1,509.4 700.8,511.1 702.5,507.4 704.3,504.5 706.0,502.2 707.8,500.4 709.5,499.0 711.3,498.0 713.0,497.5 714.8,497.3 716.5,497.6 718.3,498.4 720.0,499.8 721.8,502.0 723.5,501.4 725.3,500.6 727.0,499.6 728.7,498.6 730.5,498.2 732.2,497.6 734.0,496.9 735.7,496.2 737.5,499.2 739.2,502.3 741.0,505.4 742.7,509.7 744.5,513.9 746.2,518.1 748.0,520.1 749.7,522.1 751.5,523.9 753.2,525.5 755.0,527.0 756.7,528.2 758.4,529.2 760.2,530.0 761.9,530.5 763.7,530.8 765.4,530.8 767.2,530.6 768.9,529.5 770.7,529.0 772.4,524.7 774.2,522.3 775.9,521.6 777.7,514.3 779.4,501.5 781.2,492.6 782.9,486.3 784.7,481.1 786.4,476.8 788.1,473.5 789.9,470.9 791.6,469.0 793.4,467.9 795.1,467.7 796.9,468.3 798.6,470.0 800.4,473.0 802.1,477.9 803.9,478.8 805.6,481.5 807.4,481.7 809.1,482.5 810.9,483.9 812.6,483.8 814.4,487.1 816.1,490.0 817.8,492.5 819.6,494.5 821.3,496.3 823.1,497.8 824.8,499.1 826.6,495.4 828.3,492.8 830.1,491.0 831.8,489.7 833.6,489.1 835.3,484.2 837.1,481.3 838.8,479.2 840.6,477.6 842.3,476.5 844.1,475.8 845.8,475.5 847.5,475.8 849.3,476.5 851.0,477.9 852.8,480.2 854.5,479.1 856.3,478.7 858.0,478.9 859.8,479.9 861.5,480.4 863.3,477.9 865.0,476.2 866.8,475.1 868.5,474.6 870.3,476.0 872.0,477.2 873.8,473.9 875.5,471.5 877.2,469.8 879.0,468.6 880.7,467.9 882.5,467.8 884.2,468.2 886.0,469.3 887.7,471.4 889.5,471.1 891.2,470.5 893.0,469.8 894.7,468.8 896.5,467.7 898.2,467.7 900.0,467.5 901.7,467.1 903.4,466.5 905.2,465.8 906.9,465.1 908.7,468.1 910.4,471.2 912.2,474.3 913.9,477.3 915.7,480.4 917.4,483.4 919.2,486.5 920.9,489.6 922.7,493.9 924.4,498.1 926.2,502.3 927.9,506.2 929.7,510.1 931.4,513.6 933.1,516.9 934.9,519.0 936.6,521.0 938.4,522.8 940.1,524.3 941.9,520.4 943.6,517.5 945.4,515.4 947.1,513.9 948.9,512.8 950.6,512.3 952.4,512.4 954.1,513.0 955.9,514.3 957.6,512.2 959.4,504.2 961.1,490.8 962.8,481.6 964.6,475.0 966.3,470.4 968.1,467.6 969.8,464.7 971.6,462.7 973.3,461.5 975.1,461.4 976.8,460.7 978.6,460.4 980.3,460.3 982.1,458.5 983.8,457.7 985.6,458.0 987.3,456.2 989.1,457.0 990.8,461.5 992.5,462.9 994.3,462.4 996.0,463.7 997.8,464.7 999.5,465.5 1001.3,466.0 1003.0,466.3 1004.8,466.3 1006.5,466.0 1008.3,465.6 1010.0,465.0 1011.8,464.2 1013.5,463.3 1015.3,462.3 1017.0,461.7 1018.8,461.1 1020.5,460.3 1022.2,463.4 1024.0,466.4 1025.7,469.5 1027.5,472.5 1029.2,475.6 1031.0,478.7 1032.7,481.7 1034.5,484.8 1036.2,487.8 1038.0,492.2 1039.7,494.2 1041.5,496.0 1043.2,497.8 1045.0,499.4 1046.7,500.9 1048.5,497.7 1050.2,488.1 1051.9,480.8 1053.7,468.3 1055.4,458.6 1057.2,450.9 1058.9,444.8 1060.7,440.1 1062.4,436.7 1064.2,434.5 1065.9,433.7 1067.7,434.5 1069.4,437.1 1071.2,442.3 1072.9,445.0 1074.7,443.8 1076.4,443.7 1078.1,441.0 1079.9,440.9 1081.6,444.2 1083.4,444.7 1085.1,443.8 1086.9,443.5 1088.6,440.4 1090.4,431.0 1092.1,424.0 1093.9,418.6 1095.6,414.3 1097.4,411.1 1099.1,408.9 1100.9,403.2 1102.6,393.5 1104.4,386.7 1106.1,382.6 1107.8,381.1 1109.6,378.6 1111.3,377.9 1113.1,376.3 1114.8,375.6 1116.6,375.9 1118.3,377.3 1120.1,380.2 1121.8,385.4 1123.6,386.8 1125.3,386.6 1127.1,386.1 1128.8,385.5 1130.6,385.4 1132.3,382.6 1134.1,381.3" stroke="#8d86e8" stroke-width="1" fill="none"/>
<polyline points="87.6,226.2 89.3,228.0 91.1,229.8 92.8,231.6 94.6,233.4 96.3,235.1 98.1,236.9 99.8,238.7 101.6,240.5 103.3,242.3 105.1,244.1 106.8,245.9 108.6,247.7 110.3,249.4 112.1,251.2 113.8,251.7 115.6,252.3 117.3,252.8 119.0,252.0 120.8,250.0 122.5,247.9 124.3,245.9 126.0,242.6 127.8,239.3 129.5,236.0 131.3,232.7 133.0,229.4 134.8,226.1 136.5,222.8 138.3,219.5 140.0,216.2 141.8,212.9 143.5,209.6 145.3,207.5 147.0,205.5 148.7,204.7 150.5,204.0 152.2,203.2 154.0,202.5 155.7,203.0 157.5,203.5 159.2,204.0 161.0,205.8 162.7,207.6 164.5,209.4 166.2,211.1 168.0,211.7 169.7,212.2 171.5,212.7 173.2,213.2 174.9,213.7 176.7,214.2 178.4,214.7 180.2,214.0 181.9,213.2 183.7,212.5 185.4,211.7 187.2,209.7 188.9,207.6 190.7,205.6 192.4,203.6 194.2,201.5 195.9,199.5 197.7,197.5 199.4,195.5 201.2,193.4 202.9,192.7 204.6,191.9 206.4,191.1 208.1,190.4 209.9,189.6 211.6,188.9 213.4,188.1 215.1,188.6 216.9,189.1 218.6,188.4 220.4,187.6 222.1,188.1 223.9,189.9 225.6,191.7 227.4,192.2 229.1,192.7 230.9,193.2 232.6,193.8 234.3,193.0 236.1,192.2 237.8,191.5 239.6,190.7 241.3,190.0 243.1,189.2 244.8,188.4 246.6,187.7 248.3,186.9 250.1,186.2 251.8,185.4 253.6,185.9 255.3,186.4 257.1,187.0 258.8,187.5 260.6,188.0 262.3,189.8 264.0,191.6 265.8,193.3 267.5,195.1 269.3,198.2 271.0,201.3 272.8,204.3 274.5,207.4 276.3,210.4 278.0,213.5 279.8,216.6 281.5,219.6 283.3,222.7 285.0,225.7 286.8,228.8 288.5,231.9 290.3,234.9 292.0,238.0 293.7,241.0 295.5,244.1 297.2,247.2 299.0,250.2 300.7,253.3 302.5,255.1 304.2,256.8 306.0,258.6 307.7,260.4 309.5,262.2 311.2,264.0 313.0,265.8 314.7,267.6 316.5,269.4 318.2,271.1 320.0,272.9 321.7,274.7 323.4,276.5 325.2,278.3 326.9,280.1 328.7,280.6 330.4,279.8 332.2,279.1 333.9,278.3 335.7,277.6 337.4,278.1 339.2,278.6 340.9,279.1 342.7,279.6 344.4,278.9 346.2,278.1 347.9,277.3 349.6,276.6 351.4,275.8 353.1,275.1 354.9,274.3 356.6,273.5 358.4,272.8 360.1,272.0 361.9,271.3 363.6,271.8 365.4,273.6 367.1,275.3 368.9,277.1 370.6,277.6 372.4,278.2 374.1,278.7 375.9,279.2 377.6,279.7 379.3,281.5 381.1,283.3 382.8,285.1 384.6,286.9 386.3,288.6 388.1,289.2 389.8,289.7 391.6,290.2 393.3,290.7 395.1,289.9 396.8,289.2 398.6,288.4 400.3,287.7 402.1,286.9 403.8,286.1 405.6,286.7 407.3,287.2 409.0,287.7 410.8,288.2 412.5,288.7 414.3,289.2 416.0,289.7 417.8,290.3 419.5,290.8 421.3,291.3 423.0,293.1 424.8,294.9 426.5,296.6 428.3,298.4 430.0,301.5 431.8,304.6 433.5,307.6 435.3,310.7 437.0,313.7 438.7,316.8 440.5,319.9 442.2,322.9 444.0,326.0 445.7,329.0 447.5,332.1 449.2,335.2 451.0,338.2 452.7,341.3 454.5,344.3 456.2,347.4 458.0,350.5 459.7,353.5 461.5,356.6 463.2,359.6 465.0,362.7 466.7,365.8 468.4,368.8 470.2,371.9 471.9,374.9 473.7,378.0 475.4,379.8 477.2,381.6 478.9,383.4 480.7,385.1 482.4,385.7 484.2,386.2 485.9,386.7 487.7,387.2 489.4,387.7 491.2,388.2 492.9,388.7 494.7,389.3 496.4,389.8 498.1,390.3 499.9,390.8 501.6,391.3 503.4,391.8 505.1,392.3 506.9,392.8 508.6,393.4 510.4,395.1 512.1,396.9 513.9,398.7 515.6,400.5 517.4,403.6 519.1,406.6 520.9,409.7 522.6,412.8 524.4,415.8 526.1,418.9 527.8,421.9 529.6,425.0 531.3,428.1 533.1,429.8 534.8,431.6 536.6,433.4 538.3,435.2 540.1,437.0 541.8,438.8 543.6,440.6 545.3,441.1 547.1,441.6 548.8,442.1 550.6,442.6 552.3,443.1 554.0,443.6 555.8,444.2 557.5,444.7 559.3,445.2 561.0,445.7 562.8,446.2 564.5,446.7 566.3,447.2 568.0,449.0 569.8,450.8 571.5,452.6 573.3,454.4 575.0,456.2 576.8,456.7 578.5,457.2 580.3,459.0 582.0,460.8 583.7,462.6 585.5,464.4 587.2,466.1 589.0,467.9 590.7,469.7 592.5,471.5 594.2,473.3 596.0,475.1 597.7,476.9 599.5,478.6 601.2,480.4 603.0,482.2 604.7,484.0 606.5,484.5 608.2,485.0 610.0,485.6 611.7,487.3 613.4,489.1 615.2,490.9 616.9,492.7 618.7,494.5 620.4,495.0 622.2,495.5 623.9,496.0 625.7,496.5 627.4,497.1 629.2,497.6 630.9,498.1 632.7,497.3 634.4,496.6 636.2,495.8 637.9,495.0 639.7,494.3 641.4,494.8 643.1,495.3 644.9,495.8 646.6,496.3 648.4,496.9 650.1,497.4 651.9,497.9 653.6,498.4 655.4,500.2 657.1,502.0 658.9,503.8 660.6,505.5 662.4,507.3 664.1,507.9 665.9,508.4 667.6,510.2 669.4,511.9 671.1,513.7 672.8,515.5 674.6,517.3 676.3,519.1 678.1,520.9 679.8,522.7 681.6,524.4 683.3,526.2 685.1,528.0 686.8,529.8 688.6,530.3 690.3,530.8 692.1,531.4 693.8,531.9 695.6,531.1 697.3,530.3 699.1,530.9 700.8,531.4 702.5,530.6 704.3,529.9 706.0,529.1 707.8,528.3 709.5,527.6 711.3,526.8 713.0,526.1 714.8,525.3 716.5,524.5 718.3,523.8 720.0,523.0 721.8,522.3 723.5,522.8 725.3,523.3 727.0,523.8 728.7,524.3 730.5,526.1 732.2,527.9 734.0,529.7 735.7,531.5 737.5,534.5 739.2,537.6 741.0,540.6 742.7,542.4 744.5,544.2 746.2,546.0 748.0,546.5 749.7,547.0 751.5,547.6 753.2,548.1 755.0,548.6 756.7,549.1 758.4,549.6 760.2,550.1 761.9,550.6 763.7,551.2 765.4,551.7 767.2,552.2 768.9,551.4 770.7,550.7 772.4,548.6 774.2,546.6 775.9,544.6 777.7,542.5 779.4,539.2 781.2,535.9 782.9,533.9 784.7,531.9 786.4,529.8 788.1,527.8 789.9,525.8 791.6,523.7 793.4,521.7 795.1,519.7 796.9,517.6 798.6,515.6 800.4,513.6 802.1,511.5 803.9,509.5 805.6,507.5 807.4,506.7 809.1,506.0 810.9,505.2 812.6,505.7 814.4,507.5 816.1,509.3 817.8,511.1 819.6,511.6 821.3,512.1 823.1,512.6 824.8,513.1 826.6,512.4 828.3,511.6 830.1,510.9 831.8,510.1 833.6,509.3 835.3,507.3 837.1,505.3 838.8,504.5 840.6,503.8 842.3,503.0 844.1,502.2 845.8,501.5 847.5,500.7 849.3,500.0 851.0,499.2 852.8,498.4 854.5,497.7 856.3,496.9 858.0,496.2 859.8,495.4 861.5,495.9 863.3,495.2 865.0,494.4 866.8,493.6 868.5,492.9 870.3,493.4 872.0,493.9 873.8,493.1 875.5,492.4 877.2,491.6 879.0,490.9 880.7,490.1 882.5,489.4 884.2,488.6 886.0,487.8 887.7,487.1 889.5,487.6 891.2,488.1 893.0,488.6 894.7,489.1 896.5,489.6 898.2,491.4 900.0,493.2 901.7,495.0 903.4,496.8 905.2,498.6 906.9,500.4 908.7,503.4 910.4,506.5 912.2,509.5 913.9,512.6 915.7,515.7 917.4,518.7 919.2,521.8 920.9,524.8 922.7,526.6 924.4,528.4 926.2,530.2 927.9,532.0 929.7,533.8 931.4,535.6 933.1,537.4 934.9,537.9 936.6,538.4 938.4,538.9 940.1,539.4 941.9,538.7 943.6,537.9 945.4,537.1 947.1,536.4 948.9,535.6 950.6,534.9 952.4,534.1 954.1,533.3 955.9,532.6 957.6,531.8 959.4,529.8 961.1,526.5 962.8,523.2 964.6,519.9 966.3,516.6 968.1,513.3 969.8,511.2 971.6,509.2 973.3,507.2 975.1,505.1 976.8,504.4 978.6,503.6 980.3,502.9 982.1,500.8 983.8,498.8 985.6,496.8 987.3,493.5 989.1,490.2 990.8,486.9 992.5,484.8 994.3,484.1 996.0,484.6 997.8,485.1 999.5,485.6 1001.3,486.1 1003.0,486.6 1004.8,487.1 1006.5,487.7 1008.3,488.2 1010.0,488.7 1011.8,489.2 1013.5,489.7 1015.3,490.2 1017.0,492.0 1018.8,493.8 1020.5,495.6 1022.2,498.6 1024.0,501.7 1025.7,504.8 1027.5,507.8 1029.2,510.9 1031.0,513.9 1032.7,517.0 1034.5,520.1 1036.2,523.1 1038.0,524.9 1039.7,525.4 1041.5,525.9 1043.2,526.5 1045.0,527.0 1046.7,527.5 1048.5,526.7 1050.2,524.7 1051.9,522.7 1053.7,519.4 1055.4,516.1 1057.2,512.7 1058.9,509.4 1060.7,506.1 1062.4,502.8 1064.2,499.5 1065.9,496.2 1067.7,492.9 1069.4,489.6 1071.2,486.3 1072.9,484.3 1074.7,482.2 1076.4,480.2 1078.1,476.9 1079.9,473.6 1081.6,470.3 1083.4,468.3 1085.1,467.5 1086.9,466.7 1088.6,466.0 1090.4,464.0 1092.1,461.9 1093.9,459.9 1095.6,457.9 1097.4,455.8 1099.1,453.8 1100.9,450.5 1102.6,445.9 1104.4,441.3 1106.1,436.8 1107.8,432.2 1109.6,428.9 1111.3,425.6 1113.1,423.5 1114.8,421.5 1116.6,419.5 1118.3,417.4 1120.1,415.4 1121.8,413.4 1123.6,412.6 1125.3,413.1 1127.1,413.6 1128.8,414.2 1130.6,413.4 1132.3,411.4 1134.1,409.3" stroke="#8d86e8" stroke-width="1" fill="none"/>
<polyline points="87.6,245.5 89.3,246.6 91.1,248.1 92.8,250.1 94.6,252.6 96.3,255.6 98.1,258.9 99.8,262.4 101.6,266.3 103.3,270.2 105.1,274.4 106.8,278.6 108.6,282.9 110.3,282.2 112.1,281.5 113.8,280.5 115.6,279.6 117.3,278.9 119.0,281.0 120.8,287.4 122.5,291.2 124.3,293.5 126.0,298.2 127.8,300.5 129.5,301.1 131.3,300.2 133.0,298.0 134.8,294.6 136.5,289.9 138.3,283.9 140.0,276.4 141.8,267.1 143.5,255.2 145.3,248.4 147.0,239.7 148.7,236.9 150.5,233.6 152.2,229.6 154.0,227.9 155.7,228.3 157.5,228.9 159.2,229.7 161.0,229.5 162.7,229.5 164.5,229.8 166.2,230.4 168.0,229.4 169.7,228.5 171.5,227.9 173.2,227.5 174.9,227.4 176.7,227.8 178.4,228.5 180.2,229.4 181.9,229.5 183.7,228.9 185.4,227.5 187.2,227.9 188.9,235.0 190.7,238.4 192.4,240.0 194.2,240.2 195.9,239.2 197.7,237.2 199.4,234.1 201.2,229.8 202.9,228.9 204.6,227.7 206.4,226.1 208.1,224.2 209.9,221.8 211.6,219.0 213.4,215.6 215.1,217.3 216.9,219.0 218.6,217.4 220.4,215.4 222.1,216.1 223.9,215.7 225.6,215.4 227.4,214.3 229.1,213.4 230.9,212.6 232.6,212.0 234.3,214.3 236.1,215.7 237.8,216.4 239.6,216.7 241.3,216.4 243.1,215.7 244.8,214.6 246.6,213.0 248.3,210.9 250.1,208.2 251.8,204.8 253.6,206.2 255.3,207.9 257.1,209.7 258.8,211.6 260.6,213.7 262.3,217.7 264.0,221.9 265.8,226.1 267.5,230.4 269.3,233.5 271.0,236.5 272.8,239.6 274.5,242.7 276.3,245.7 278.0,248.8 279.8,251.8 281.5,254.9 283.3,258.0 285.0,261.0 286.8,264.1 288.5,267.1 290.3,270.2 292.0,273.3 293.7,276.3 295.5,279.4 297.2,282.4 299.0,285.5 300.7,288.6 302.5,287.8 304.2,287.1 306.0,286.6 307.7,286.2 309.5,285.9 311.2,285.9 313.0,286.2 314.7,286.8 316.5,287.9 318.2,289.5 320.0,291.5 321.7,294.0 323.4,296.9 325.2,300.2 326.9,303.8 328.7,303.9 330.4,304.9 332.2,305.5 333.9,305.5 335.7,305.1 337.4,304.6 339.2,304.4 340.9,304.2 342.7,304.3 344.4,305.3 346.2,305.8 347.9,305.8 349.6,305.4 351.4,304.5 353.1,303.3 354.9,301.6 356.6,299.5 358.4,296.8 360.1,293.4 361.9,289.0 363.6,291.1 365.4,294.0 367.1,297.3 368.9,300.9 370.6,300.9 372.4,301.2 374.1,301.7 375.9,302.5 377.6,303.4 379.3,303.4 381.1,303.7 382.8,304.3 384.6,305.4 386.3,307.0 388.1,306.1 389.8,305.5 391.6,305.2 393.3,305.2 395.1,307.0 396.8,307.9 398.6,308.0 400.3,307.5 402.1,306.5 403.8,304.8 405.6,304.9 407.3,305.3 409.0,305.9 410.8,306.9 412.5,308.1 414.3,309.5 416.0,311.2 417.8,313.0 419.5,314.9 421.3,317.0 423.0,321.0 424.8,325.2 426.5,329.4 428.3,333.7 430.0,336.8 431.8,339.8 433.5,342.9 435.3,346.0 437.0,349.0 438.7,352.1 440.5,355.1 442.2,358.2 444.0,361.3 445.7,364.3 447.5,367.4 449.2,370.4 451.0,373.5 452.7,376.6 454.5,379.6 456.2,382.7 458.0,385.7 459.7,388.8 461.5,391.9 463.2,394.9 465.0,398.0 466.7,401.0 468.4,404.1 470.2,407.2 471.9,410.2 473.7,413.3 475.4,412.5 477.2,411.9 478.9,411.3 480.7,410.9 482.4,409.8 484.2,408.9 485.9,408.1 487.7,407.5 489.4,407.1 491.2,406.9 492.9,407.0 494.7,407.4 496.4,408.0 498.1,409.0 499.9,410.2 501.6,411.6 503.4,413.2 505.1,415.1 506.9,417.0 508.6,419.1 510.4,423.1 512.1,427.2 513.9,431.5 515.6,435.8 517.4,438.9 519.1,441.9 520.9,445.0 522.6,448.0 524.4,451.1 526.1,454.2 527.8,457.2 529.6,460.3 531.3,463.3 533.1,462.6 534.8,461.9 536.6,461.4 538.3,460.9 540.1,460.7 541.8,460.7 543.6,461.0 545.3,459.9 547.1,459.0 548.8,458.2 550.6,457.7 552.3,457.5 554.0,457.7 555.8,458.2 557.5,459.1 559.3,460.3 561.0,461.8 562.8,463.6 564.5,465.6 566.3,467.7 568.0,471.0 569.8,474.5 571.5,478.4 573.3,482.3 575.0,486.5 576.8,486.9 578.5,487.5 580.3,486.9 582.0,486.5 583.7,486.3 585.5,486.3 587.2,486.6 589.0,487.2 590.7,488.3 592.5,489.8 594.2,491.8 596.0,494.4 597.7,497.3 599.5,500.6 601.2,504.2 603.0,508.0 604.7,512.0 606.5,512.3 608.2,512.8 610.0,513.5 611.7,513.1 613.4,512.9 615.2,512.8 616.9,513.1 618.7,513.8 620.4,512.7 622.2,511.9 623.9,511.2 625.7,510.8 627.4,510.8 629.2,511.1 630.9,511.8 632.7,512.8 634.4,512.9 636.2,512.2 637.9,510.9 639.7,508.7 641.4,508.9 643.1,509.4 644.9,510.3 646.6,511.5 648.4,513.0 650.1,514.8 651.9,516.7 653.6,518.8 655.4,522.1 657.1,525.7 658.9,529.5 660.6,533.5 662.4,537.6 664.1,538.1 665.9,538.7 667.6,538.1 669.4,537.7 671.1,537.5 672.8,537.4 674.6,537.7 676.3,538.4 678.1,539.4 679.8,541.0 681.6,543.0 683.3,545.5 685.1,548.4 686.8,551.7 688.6,551.6 690.3,551.8 692.1,552.2 693.8,552.8 695.6,553.2 697.3,553.1 699.1,552.3 700.8,551.7 702.5,553.8 704.3,555.2 706.0,556.0 707.8,556.3 709.5,556.2 711.3,555.6 713.0,554.7 714.8,553.3 716.5,551.5 718.3,549.2 720.0,546.2 721.8,542.6 723.5,544.2 725.3,546.0 727.0,548.0 728.7,550.1 730.5,554.1 732.2,558.2 734.0,562.4 735.7,566.8 737.5,569.8 739.2,572.9 741.0,575.9 742.7,575.2 744.5,574.5 746.2,574.0 748.0,572.9 749.7,572.0 751.5,571.2 753.2,570.6 755.0,570.2 756.7,570.0 758.4,570.0 760.2,570.2 761.9,570.7 763.7,571.5 765.4,572.5 767.2,573.8 768.9,573.3 770.7,572.3 772.4,572.5 774.2,570.9 775.9,567.6 777.7,570.8 779.4,576.9 781.2,579.2 782.9,581.5 784.7,582.6 786.4,582.8 788.1,582.1 789.9,580.7 791.6,578.4 793.4,575.5 795.1,571.7 796.9,567.0 798.6,561.2 800.4,554.2 802.1,545.2 803.9,540.2 805.6,533.5 807.4,531.7 809.1,529.4 810.9,526.5 812.6,527.6 814.4,527.9 816.1,528.6 817.8,529.6 819.6,528.7 821.3,527.9 823.1,527.4 824.8,527.2 826.6,529.3 828.3,530.4 830.1,530.7 831.8,530.4 833.6,529.6 835.3,530.4 837.1,529.3 838.8,529.8 840.6,529.9 842.3,529.5 844.1,528.7 845.8,527.4 847.5,525.7 849.3,523.4 851.0,520.5 852.8,516.7 854.5,516.2 856.3,515.2 858.0,513.4 859.8,510.9 861.5,511.4 863.3,512.4 865.0,512.6 866.8,512.2 868.5,511.1 870.3,510.7 872.0,510.6 873.8,512.4 875.5,513.2 877.2,513.5 879.0,513.2 880.7,512.3 882.5,510.9 884.2,509.0 886.0,506.3 887.7,502.7 889.5,504.1 891.2,505.7 893.0,507.5 894.7,509.5 896.5,511.6 898.2,515.2 900.0,519.0 901.7,523.0 903.4,527.1 905.2,531.3 906.9,535.7 908.7,538.7 910.4,541.8 912.2,544.8 913.9,547.9 915.7,551.0 917.4,554.0 919.2,557.1 920.9,560.1 922.7,559.4 924.4,558.7 926.2,558.2 927.9,557.7 929.7,557.5 931.4,557.5 933.1,557.8 934.9,556.7 936.6,555.8 938.4,555.0 940.1,554.5 941.9,556.9 943.6,558.3 945.4,558.9 947.1,558.9 948.9,558.4 950.6,557.4 952.4,555.8 954.1,553.7 955.9,550.8 957.6,551.4 959.4,555.3 961.1,562.2 962.8,564.8 964.6,564.8 966.3,562.8 968.1,558.9 969.8,557.8 971.6,555.7 973.3,552.8 975.1,548.9 976.8,548.0 978.6,546.9 980.3,545.4 982.1,543.2 983.8,539.9 985.6,535.5 987.3,530.7 989.1,523.3 990.8,512.2 992.5,506.7 994.3,505.7 996.0,505.5 997.8,505.5 999.5,505.7 1001.3,506.2 1003.0,507.0 1004.8,508.0 1006.5,509.3 1008.3,510.7 1010.0,512.4 1011.8,514.2 1013.5,516.1 1015.3,518.2 1017.0,522.3 1018.8,526.6 1020.5,530.9 1022.2,533.9 1024.0,537.0 1025.7,540.1 1027.5,543.1 1029.2,546.2 1031.0,549.2 1032.7,552.3 1034.5,555.4 1036.2,558.4 1038.0,557.7 1039.7,556.7 1041.5,555.9 1043.2,555.1 1045.0,554.5 1046.7,554.1 1048.5,555.7 1050.2,561.3 1051.9,564.5 1053.7,570.4 1055.4,573.5 1057.2,574.6 1058.9,574.1 1060.7,572.2 1062.4,569.0 1064.2,564.5 1065.9,558.7 1067.7,551.4 1069.4,542.2 1071.2,530.3 1072.9,523.6 1074.7,520.7 1076.4,516.8 1078.1,512.8 1079.9,506.3 1081.6,496.4 1083.4,491.9 1085.1,491.2 1086.9,490.0 1088.6,491.5 1090.4,496.9 1092.1,499.9 1093.9,501.2 1095.6,501.4 1097.4,500.5 1099.1,498.7 1100.9,497.8 1102.6,498.4 1104.4,496.0 1106.1,491.0 1107.8,483.3 1109.6,479.1 1111.3,473.3 1113.1,470.8 1114.8,467.4 1116.6,463.1 1118.3,457.6 1120.1,450.6 1121.8,441.4 1123.6,438.4 1125.3,439.7 1127.1,441.2 1128.8,442.8 1130.6,441.4 1132.3,440.1 1134.1,437.4" stroke="#8d86e8" stroke-width="1" fill="none"/>
<path d="M99.8 654.5V668.8M101.6 654.5V668.6M103.3 654.5V668.2M105.1 654.5V667.7M106.8 654.5V667.2M108.6 654.5V666.6M110.3 654.5V660.7M112.1 654.5V657.1M113.8 654.5V649.7M115.6 654.5V645.7M117.3 654.5V644.1M119.0 654.5V638.7M120.8 654.5V631.3M122.5 654.5V628.4M126.0 654.5V625.3M154.0 654.5V664.5M155.7 654.5V661.9M157.5 654.5V660.7M159.2 654.5V660.4M168.0 654.5V658.3M169.7 654.5V656.0M171.5 654.5V655.1M180.2 654.5V654.2M181.9 654.5V652.3M183.7 654.5V651.9M187.2 654.5V648.3M188.9 654.5V641.4M190.7 654.5V638.5M192.4 654.5V638.3M218.6 654.5V663.5M220.4 654.5V660.6M222.1 654.5V659.2M223.9 654.5V658.7M227.4 654.5V654.1M229.1 654.5V651.8M230.9 654.5V651.1M234.3 654.5V647.4M236.1 654.5V645.8M265.8 654.5V666.8M267.5 654.5V666.7M269.3 654.5V666.5M271.0 654.5V666.2M272.8 654.5V665.9M274.5 654.5V665.5M276.3 654.5V665.1M278.0 654.5V664.7M279.8 654.5V664.2M281.5 654.5V663.7M283.3 654.5V663.3M285.0 654.5V662.8M286.8 654.5V662.4M288.5 654.5V661.9M290.3 654.5V661.5M292.0 654.5V661.1M293.7 654.5V660.7M295.5 654.5V660.3M297.2 654.5V659.9M299.0 654.5V659.6M300.7 654.5V659.3M302.5 654.5V653.6M304.2 654.5V650.2M306.0 654.5V648.5M307.7 654.5V647.9M328.7 654.5V651.9M330.4 654.5V643.9M332.2 654.5V639.7M333.9 654.5V638.1M344.4 654.5V643.7M346.2 654.5V642.9M370.6 654.5V658.3M372.4 654.5V655.5M374.1 654.5V654.3M375.9 654.5V654.0M388.1 654.5V654.5M389.8 654.5V652.1M391.6 654.5V651.3M395.1 654.5V646.8M396.8 654.5V644.8M398.6 654.5V644.6M428.3 654.5V664.3M430.0 654.5V664.3M431.8 654.5V664.1M433.5 654.5V663.9M435.3 654.5V663.6M437.0 654.5V663.3M438.7 654.5V662.9M440.5 654.5V662.6M442.2 654.5V662.2M444.0 654.5V661.9M445.7 654.5V661.5M447.5 654.5V661.1M449.2 654.5V660.8M451.0 654.5V660.4M452.7 654.5V660.1M454.5 654.5V659.7M456.2 654.5V659.4M458.0 654.5V659.1M459.7 654.5V658.8M461.5 654.5V658.5M463.2 654.5V658.3M465.0 654.5V658.0M466.7 654.5V657.8M468.4 654.5V657.6M470.2 654.5V657.4M471.9 654.5V657.2M473.7 654.5V657.0M475.4 654.5V651.5M477.2 654.5V648.2M478.9 654.5V646.6M480.7 654.5V646.2M482.4 654.5V641.1M484.2 654.5V638.8M485.9 654.5V638.3M520.9 654.5V660.8M522.6 654.5V660.7M524.4 654.5V660.6M526.1 654.5V660.4M527.8 654.5V660.2M529.6 654.5V660.0M531.3 654.5V659.8M533.1 654.5V654.2M534.8 654.5V650.9M536.6 654.5V649.2M538.3 654.5V648.7M545.3 654.5V646.1M547.1 654.5V644.1M548.8 654.5V643.7M576.8 654.5V655.6M578.5 654.5V652.6M580.3 654.5V651.2M582.0 654.5V650.8M606.5 654.5V654.8M608.2 654.5V651.9M610.0 654.5V650.4M611.7 654.5V650.1M620.4 654.5V649.0M622.2 654.5V646.9M623.9 654.5V646.4M632.7 654.5V647.5M634.4 654.5V646.0M636.2 654.5V645.9M664.1 654.5V657.9M665.9 654.5V654.8M667.6 654.5V653.2M669.4 654.5V652.7M688.6 654.5V655.0M690.3 654.5V652.2M692.1 654.5V651.0M693.8 654.5V650.7M695.6 654.5V645.8M697.3 654.5V643.6M699.1 654.5V643.2M702.5 654.5V640.2M704.3 654.5V639.1M737.5 654.5V665.1M739.2 654.5V665.0M741.0 654.5V664.7M742.7 654.5V659.1M744.5 654.5V655.7M746.2 654.5V653.9M748.0 654.5V647.8M749.7 654.5V644.8M751.5 654.5V643.8M768.9 654.5V654.0M770.7 654.5V652.0M772.4 654.5V646.0M774.2 654.5V643.2M775.9 654.5V642.7M777.7 654.5V638.2M779.4 654.5V631.5M781.2 654.5V629.2M803.9 654.5V661.7M805.6 654.5V659.8M807.4 654.5V659.1M819.6 654.5V659.7M821.3 654.5V657.4M823.1 654.5V656.5M826.6 654.5V651.9M828.3 654.5V649.8M830.1 654.5V649.5M835.3 654.5V648.3M837.1 654.5V647.2M854.5 654.5V659.3M856.3 654.5V657.3M858.0 654.5V656.6M863.3 654.5V653.3M865.0 654.5V651.4M866.8 654.5V651.2M873.8 654.5V651.4M875.5 654.5V650.2M905.2 654.5V666.9M906.9 654.5V666.7M908.7 654.5V666.4M910.4 654.5V666.1M912.2 654.5V665.7M913.9 654.5V665.3M915.7 654.5V664.8M917.4 654.5V664.4M919.2 654.5V663.9M920.9 654.5V663.5M922.7 654.5V657.6M924.4 654.5V654.1M926.2 654.5V652.2M927.9 654.5V651.5M929.7 654.5V651.4M934.9 654.5V648.2M936.6 654.5V646.0M938.4 654.5V645.5M941.9 654.5V641.8M943.6 654.5V640.3M957.6 654.5V650.2M959.4 654.5V643.6M961.1 654.5V635.3M962.8 654.5V631.8M964.6 654.5V631.4M982.1 654.5V657.7M983.8 654.5V656.5M987.3 654.5V652.0M989.1 654.5V650.1M990.8 654.5V650.1M1018.8 654.5V668.8M1020.5 654.5V668.6M1022.2 654.5V668.3M1024.0 654.5V667.9M1025.7 654.5V667.5M1027.5 654.5V667.0M1029.2 654.5V666.5M1031.0 654.5V666.0M1032.7 654.5V665.4M1034.5 654.5V664.9M1036.2 654.5V664.4M1038.0 654.5V658.5M1039.7 654.5V649.5M1041.5 654.5V644.5M1043.2 654.5V642.3M1045.0 654.5V641.8M1048.5 654.5V638.9M1050.2 654.5V632.4M1051.9 654.5V630.1M1053.7 654.5V625.1M1055.4 654.5V624.2M1074.7 654.5V658.3M1076.4 654.5V657.1M1078.1 654.5V651.8M1079.9 654.5V649.6M1081.6 654.5V649.4M1088.6 654.5V651.6M1090.4 654.5V645.5M1092.1 654.5V643.2M1100.9 654.5V648.7M1102.6 654.5V643.4M1104.4 654.5V641.8M1130.6 654.5V668.4M1132.3 654.5V660.1M1134.1 654.5V655.5" stroke="#ee2222" stroke-width="1" shape-rendering="crispEdges" fill="none"/>
<path d="M87.6 654.5V663.4M89.3 654.5V665.5M91.1 654.5V667.0M92.8 654.5V668.0M94.6 654.5V668.6M96.3 654.5V668.9M98.1 654.5V669.0M124.3 654.5V628.5M127.8 654.5V625.5M129.5 654.5V627.9M131.3 654.5V631.7M133.0 654.5V636.1M134.8 654.5V640.8M136.5 654.5V645.4M138.3 654.5V649.8M140.0 654.5V653.8M141.8 654.5V657.3M143.5 654.5V660.4M145.3 654.5V663.0M147.0 654.5V665.1M148.7 654.5V666.8M150.5 654.5V668.2M152.2 654.5V669.2M161.0 654.5V660.7M162.7 654.5V661.3M164.5 654.5V662.1M166.2 654.5V662.9M173.2 654.5V655.2M174.9 654.5V656.0M176.7 654.5V657.1M178.4 654.5V658.3M185.4 654.5V652.5M194.2 654.5V639.8M195.9 654.5V642.4M197.7 654.5V645.5M199.4 654.5V648.8M201.2 654.5V652.1M202.9 654.5V655.2M204.6 654.5V658.0M206.4 654.5V660.5M208.1 654.5V662.6M209.9 654.5V664.4M211.6 654.5V665.9M213.4 654.5V667.0M215.1 654.5V667.8M216.9 654.5V668.4M225.6 654.5V658.9M232.6 654.5V651.6M237.8 654.5V646.0M239.6 654.5V647.3M241.3 654.5V649.3M243.1 654.5V651.5M244.8 654.5V653.9M246.6 654.5V656.2M248.3 654.5V658.3M250.1 654.5V660.2M251.8 654.5V661.9M253.6 654.5V663.3M255.3 654.5V664.4M257.1 654.5V665.3M258.8 654.5V665.9M260.6 654.5V666.4M262.3 654.5V666.7M264.0 654.5V666.8M309.5 654.5V648.1M311.2 654.5V648.7M313.0 654.5V649.6M314.7 654.5V650.7M316.5 654.5V651.8M318.2 654.5V652.8M320.0 654.5V653.8M321.7 654.5V654.7M323.4 654.5V655.5M325.2 654.5V656.2M326.9 654.5V656.8M335.7 654.5V638.3M337.4 654.5V639.6M339.2 654.5V641.7M340.9 654.5V644.1M342.7 654.5V646.5M347.9 654.5V643.6M349.6 654.5V645.1M351.4 654.5V647.1M353.1 654.5V649.4M354.9 654.5V651.7M356.6 654.5V653.9M358.4 654.5V655.9M360.1 654.5V657.7M361.9 654.5V659.2M363.6 654.5V660.5M365.4 654.5V661.6M367.1 654.5V662.5M368.9 654.5V663.1M377.6 654.5V654.4M379.3 654.5V655.1M381.1 654.5V656.1M382.8 654.5V657.1M384.6 654.5V658.1M386.3 654.5V659.0M393.3 654.5V651.4M400.3 654.5V645.6M402.1 654.5V647.3M403.8 654.5V649.3M405.6 654.5V651.4M407.3 654.5V653.6M409.0 654.5V655.6M410.8 654.5V657.4M412.5 654.5V659.0M414.3 654.5V660.4M416.0 654.5V661.5M417.8 654.5V662.4M419.5 654.5V663.1M421.3 654.5V663.7M423.0 654.5V664.0M424.8 654.5V664.3M426.5 654.5V664.4M487.7 654.5V639.1M489.4 654.5V640.7M491.2 654.5V642.7M492.9 654.5V645.0M494.7 654.5V647.2M496.4 654.5V649.3M498.1 654.5V651.3M499.9 654.5V653.1M501.6 654.5V654.7M503.4 654.5V656.1M505.1 654.5V657.3M506.9 654.5V658.2M508.6 654.5V659.0M510.4 654.5V659.6M512.1 654.5V660.1M513.9 654.5V660.4M515.6 654.5V660.6M517.4 654.5V660.7M519.1 654.5V660.8M540.1 654.5V648.8M541.8 654.5V649.5M543.6 654.5V650.4M550.6 654.5V644.3M552.3 654.5V645.6M554.0 654.5V647.2M555.8 654.5V649.0M557.5 654.5V650.8M559.3 654.5V652.5M561.0 654.5V654.1M562.8 654.5V655.5M564.5 654.5V656.8M566.3 654.5V657.9M568.0 654.5V658.7M569.8 654.5V659.4M571.5 654.5V660.0M573.3 654.5V660.4M575.0 654.5V660.7M583.7 654.5V651.1M585.5 654.5V651.8M587.2 654.5V652.8M589.0 654.5V653.9M590.7 654.5V654.9M592.5 654.5V655.9M594.2 654.5V656.9M596.0 654.5V657.7M597.7 654.5V658.4M599.5 654.5V658.9M601.2 654.5V659.4M603.0 654.5V659.8M604.7 654.5V660.0M613.4 654.5V650.4M615.2 654.5V651.1M616.9 654.5V652.1M618.7 654.5V653.2M625.7 654.5V647.0M627.4 654.5V648.1M629.2 654.5V649.6M630.9 654.5V651.2M637.9 654.5V646.9M639.7 654.5V648.4M641.4 654.5V650.2M643.1 654.5V652.1M644.9 654.5V653.9M646.6 654.5V655.7M648.4 654.5V657.3M650.1 654.5V658.7M651.9 654.5V659.8M653.6 654.5V660.8M655.4 654.5V661.6M657.1 654.5V662.2M658.9 654.5V662.7M660.6 654.5V663.0M662.4 654.5V663.1M671.1 654.5V652.9M672.8 654.5V653.6M674.6 654.5V654.4M676.3 654.5V655.4M678.1 654.5V656.3M679.8 654.5V657.3M681.6 654.5V658.1M683.3 654.5V658.8M685.1 654.5V659.4M686.8 654.5V660.0M700.8 654.5V644.0M706.0 654.5V639.7M707.8 654.5V641.5M709.5 654.5V643.9M711.3 654.5V646.5M713.0 654.5V649.3M714.8 654.5V652.0M716.5 654.5V654.4M718.3 654.5V656.7M720.0 654.5V658.6M721.8 654.5V660.3M723.5 654.5V661.6M725.3 654.5V662.8M727.0 654.5V663.6M728.7 654.5V664.3M730.5 654.5V664.7M732.2 654.5V665.0M734.0 654.5V665.2M735.7 654.5V665.2M753.2 654.5V644.2M755.0 654.5V645.4M756.7 654.5V647.2M758.4 654.5V649.2M760.2 654.5V651.2M761.9 654.5V653.2M763.7 654.5V655.0M765.4 654.5V656.7M767.2 654.5V658.1M782.9 654.5V629.8M784.7 654.5V632.3M786.4 654.5V635.9M788.1 654.5V640.0M789.9 654.5V644.2M791.6 654.5V648.4M793.4 654.5V652.3M795.1 654.5V655.8M796.9 654.5V658.9M798.6 654.5V661.6M800.4 654.5V663.8M802.1 654.5V665.6M809.1 654.5V659.4M810.9 654.5V660.1M812.6 654.5V661.1M814.4 654.5V662.1M816.1 654.5V663.2M817.8 654.5V664.2M824.8 654.5V656.6M831.8 654.5V650.3M833.6 654.5V651.8M838.8 654.5V647.7M840.6 654.5V649.2M842.3 654.5V651.2M844.1 654.5V653.5M845.8 654.5V655.8M847.5 654.5V658.1M849.3 654.5V660.1M851.0 654.5V661.9M852.8 654.5V663.4M859.8 654.5V656.8M861.5 654.5V657.6M868.5 654.5V651.9M870.3 654.5V653.3M872.0 654.5V655.0M877.2 654.5V650.4M879.0 654.5V651.5M880.7 654.5V653.2M882.5 654.5V655.1M884.2 654.5V657.1M886.0 654.5V659.0M887.7 654.5V660.7M889.5 654.5V662.2M891.2 654.5V663.5M893.0 654.5V664.6M894.7 654.5V665.5M896.5 654.5V666.1M898.2 654.5V666.6M900.0 654.5V666.9M901.7 654.5V667.0M903.4 654.5V667.0M931.4 654.5V651.9M933.1 654.5V652.6M940.1 654.5V646.0M945.4 654.5V640.5M947.1 654.5V641.9M948.9 654.5V643.9M950.6 654.5V646.3M952.4 654.5V648.8M954.1 654.5V651.2M955.9 654.5V653.5M966.3 654.5V633.2M968.1 654.5V636.3M969.8 654.5V640.0M971.6 654.5V644.0M973.3 654.5V647.9M975.1 654.5V651.7M976.8 654.5V655.1M978.6 654.5V658.2M980.3 654.5V660.8M985.6 654.5V656.5M992.5 654.5V651.3M994.3 654.5V653.1M996.0 654.5V655.2M997.8 654.5V657.5M999.5 654.5V659.6M1001.3 654.5V661.6M1003.0 654.5V663.4M1004.8 654.5V664.9M1006.5 654.5V666.2M1008.3 654.5V667.2M1010.0 654.5V667.9M1011.8 654.5V668.5M1013.5 654.5V668.8M1015.3 654.5V668.9M1017.0 654.5V668.9M1046.7 654.5V642.7M1057.2 654.5V625.9M1058.9 654.5V629.2M1060.7 654.5V633.5M1062.4 654.5V638.1M1064.2 654.5V642.8M1065.9 654.5V647.3M1067.7 654.5V651.5M1069.4 654.5V655.2M1071.2 654.5V658.5M1072.9 654.5V661.3M1083.4 654.5V650.5M1085.1 654.5V652.3M1086.9 654.5V654.6M1093.9 654.5V643.3M1095.6 654.5V645.1M1097.4 654.5V647.7M1099.1 654.5V650.8M1106.1 654.5V642.6M1107.8 654.5V645.0M1109.6 654.5V648.1M1111.3 654.5V651.7M1113.1 654.5V655.3M1114.8 654.5V658.7M1116.6 654.5V661.9M1118.3 654.5V664.7M1120.1 654.5V667.1M1121.8 654.5V669.1M1123.6 654.5V670.7M1125.3 654.5V671.9M1127.1 654.5V672.8M1128.8 654.5V673.4" stroke="#38eaea" stroke-width="1" shape-rendering="crispEdges" fill="none"/>
<polyline points="87.6,641.4 89.3,643.9 91.1,646.8 92.8,650.0 94.6,653.2 96.3,656.6 98.1,659.9 99.8,663.2 101.6,666.5 103.3,669.7 105.1,672.7 106.8,675.6 108.6,678.5 110.3,679.9 112.1,680.5 113.8,679.4 115.6,677.3 117.3,674.9 119.0,671.3 120.8,665.9 122.5,659.8 124.3,653.8 126.0,647.1 127.8,640.3 129.5,634.2 131.3,628.9 133.0,624.7 134.8,621.5 136.5,619.4 138.3,618.3 140.0,618.2 141.8,618.8 143.5,620.2 145.3,622.1 147.0,624.6 148.7,627.4 150.5,630.6 152.2,634.0 154.0,636.3 155.7,638.1 157.5,639.5 159.2,640.9 161.0,642.3 162.7,643.9 164.5,645.6 166.2,647.5 168.0,648.4 169.7,648.8 171.5,648.9 173.2,649.1 174.9,649.4 176.7,650.0 178.4,650.9 180.2,650.8 181.9,650.3 183.7,649.7 185.4,649.3 187.2,647.8 188.9,644.8 190.7,641.1 192.4,637.3 194.2,633.9 195.9,631.1 197.7,629.0 199.4,627.7 201.2,627.2 202.9,627.3 204.6,628.1 206.4,629.5 208.1,631.4 209.9,633.7 211.6,636.3 213.4,639.2 215.1,642.3 216.9,645.5 218.6,647.6 220.4,649.0 222.1,650.1 223.9,651.1 225.6,652.1 227.4,652.0 229.1,651.3 230.9,650.5 232.6,649.9 234.3,648.2 236.1,646.2 237.8,644.2 239.6,642.6 241.3,641.4 243.1,640.7 244.8,640.5 246.6,640.9 248.3,641.8 250.1,643.1 251.8,644.8 253.6,646.9 255.3,649.2 257.1,651.6 258.8,654.3 260.6,657.0 262.3,659.9 264.0,662.7 265.8,665.6 267.5,668.4 269.3,671.1 271.0,673.9 272.8,676.5 274.5,679.0 276.3,681.5 278.0,683.8 279.8,686.1 281.5,688.2 283.3,690.3 285.0,692.2 286.8,694.0 288.5,695.7 290.3,697.3 292.0,698.9 293.7,700.3 295.5,701.6 297.2,702.9 299.0,704.1 300.7,705.2 302.5,705.0 304.2,704.0 306.0,702.6 307.7,701.1 309.5,699.6 311.2,698.3 313.0,697.1 314.7,696.2 316.5,695.6 318.2,695.2 320.0,695.1 321.7,695.1 323.4,695.4 325.2,695.8 326.9,696.3 328.7,695.7 330.4,693.2 332.2,689.8 333.9,686.0 335.7,682.3 337.4,678.8 339.2,675.8 340.9,673.4 342.7,671.6 344.4,669.1 346.2,666.4 347.9,663.9 349.6,661.7 351.4,660.0 353.1,658.8 354.9,658.1 356.6,658.0 358.4,658.3 360.1,659.0 361.9,660.1 363.6,661.5 365.4,663.2 367.1,665.0 368.9,667.0 370.6,667.9 372.4,668.1 374.1,668.1 375.9,668.0 377.6,667.9 379.3,668.1 381.1,668.4 382.8,669.0 384.6,669.9 386.3,670.9 388.1,670.9 389.8,670.4 391.6,669.6 393.3,668.9 395.1,667.1 396.8,664.9 398.6,662.6 400.3,660.5 402.1,658.9 403.8,657.6 405.6,656.9 407.3,656.7 409.0,657.0 410.8,657.6 412.5,658.7 414.3,660.0 416.0,661.6 417.8,663.5 419.5,665.5 421.3,667.6 423.0,669.8 424.8,672.1 426.5,674.3 428.3,676.6 430.0,678.9 431.8,681.1 433.5,683.3 435.3,685.4 437.0,687.4 438.7,689.4 440.5,691.2 442.2,693.0 444.0,694.7 445.7,696.3 447.5,697.9 449.2,699.3 451.0,700.7 452.7,702.0 454.5,703.2 456.2,704.3 458.0,705.4 459.7,706.4 461.5,707.3 463.2,708.2 465.0,709.0 466.7,709.8 468.4,710.5 470.2,711.2 471.9,711.8 473.7,712.4 475.4,711.7 477.2,710.2 478.9,708.4 480.7,706.5 482.4,703.4 484.2,699.7 485.9,696.0 487.7,692.4 489.4,689.2 491.2,686.5 492.9,684.3 494.7,682.6 496.4,681.4 498.1,680.7 499.9,680.4 501.6,680.4 503.4,680.8 505.1,681.4 506.9,682.3 508.6,683.3 510.4,684.5 512.1,685.8 513.9,687.2 515.6,688.6 517.4,690.0 519.1,691.5 520.9,692.9 522.6,694.4 524.4,695.8 526.1,697.2 527.8,698.5 529.6,699.8 531.3,701.0 533.1,700.9 534.8,700.1 536.6,698.9 538.3,697.5 540.1,696.2 541.8,695.0 543.6,694.1 545.3,692.1 547.1,689.7 548.8,687.2 550.6,684.8 552.3,682.8 554.0,681.1 555.8,679.8 557.5,679.0 559.3,678.5 561.0,678.4 562.8,678.7 564.5,679.2 566.3,680.0 568.0,680.9 569.8,682.1 571.5,683.4 573.3,684.7 575.0,686.2 576.8,686.4 578.5,686.0 580.3,685.2 582.0,684.4 583.7,683.6 585.5,683.0 587.2,682.6 589.0,682.4 590.7,682.5 592.5,682.8 594.2,683.4 596.0,684.1 597.7,685.0 599.5,686.0 601.2,687.2 603.0,688.4 604.7,689.7 606.5,689.7 608.2,689.1 610.0,688.2 611.7,687.2 613.4,686.2 615.2,685.4 616.9,684.9 618.7,684.6 620.4,683.3 622.2,681.6 623.9,679.7 625.7,678.0 627.4,676.5 629.2,675.3 630.9,674.5 632.7,672.9 634.4,670.9 636.2,669.0 637.9,667.2 639.7,665.8 641.4,664.8 643.1,664.2 644.9,664.1 646.6,664.4 648.4,665.0 650.1,666.0 651.9,667.2 653.6,668.7 655.4,670.3 657.1,672.1 658.9,674.0 660.6,675.9 662.4,677.9 664.1,678.7 665.9,678.8 667.6,678.5 669.4,678.1 671.1,677.7 672.8,677.5 674.6,677.5 676.3,677.7 678.1,678.1 679.8,678.7 681.6,679.6 683.3,680.6 685.1,681.7 686.8,683.0 688.6,683.1 690.3,682.6 692.1,681.8 693.8,680.9 695.6,678.9 697.3,676.4 699.1,673.7 700.8,671.3 702.5,668.0 704.3,664.4 706.0,661.0 707.8,658.0 709.5,655.5 711.3,653.7 713.0,652.5 714.8,651.9 716.5,651.9 718.3,652.4 720.0,653.3 721.8,654.7 723.5,656.3 725.3,658.2 727.0,660.3 728.7,662.6 730.5,665.0 732.2,667.4 734.0,669.9 735.7,672.4 737.5,674.8 739.2,677.2 741.0,679.6 742.7,680.7 744.5,680.9 746.2,680.8 748.0,679.3 749.7,677.0 751.5,674.5 753.2,672.2 755.0,670.1 756.7,668.4 758.4,667.1 760.2,666.4 761.9,666.1 763.7,666.2 765.4,666.7 767.2,667.5 768.9,667.4 770.7,666.9 772.4,664.9 774.2,662.3 775.9,659.5 777.7,655.8 779.4,650.4 781.2,644.6 782.9,638.8 784.7,633.7 786.4,629.4 788.1,626.0 789.9,623.6 791.6,622.2 793.4,621.7 795.1,622.0 796.9,623.0 798.6,624.7 800.4,626.8 802.1,629.4 803.9,631.1 805.6,632.3 807.4,633.4 809.1,634.5 810.9,635.8 812.6,637.3 814.4,639.1 816.1,641.1 817.8,643.3 819.6,644.5 821.3,645.2 823.1,645.7 824.8,646.1 826.6,645.5 828.3,644.4 830.1,643.3 831.8,642.3 833.6,641.7 835.3,640.3 837.1,638.6 838.8,637.0 840.6,635.8 842.3,635.0 844.1,634.8 845.8,635.1 847.5,635.9 849.3,637.2 851.0,638.9 852.8,641.0 854.5,642.1 856.3,642.8 858.0,643.3 859.8,643.8 861.5,644.5 863.3,644.2 865.0,643.5 866.8,642.8 868.5,642.2 870.3,641.9 872.0,642.0 873.8,641.3 875.5,640.3 877.2,639.3 879.0,638.6 880.7,638.3 882.5,638.5 884.2,639.0 886.0,640.1 887.7,641.5 889.5,643.3 891.2,645.4 893.0,647.7 894.7,650.3 896.5,653.0 898.2,655.8 900.0,658.6 901.7,661.5 903.4,664.4 905.2,667.3 906.9,670.1 908.7,672.9 910.4,675.5 912.2,678.1 913.9,680.6 915.7,683.0 917.4,685.3 919.2,687.5 920.9,689.6 922.7,690.3 924.4,690.2 926.2,689.7 927.9,689.0 929.7,688.3 931.4,687.7 933.1,687.2 934.9,685.8 936.6,683.8 938.4,681.7 940.1,679.8 941.9,676.8 943.6,673.5 945.4,670.3 947.1,667.4 948.9,664.9 950.6,663.0 952.4,661.7 954.1,660.9 955.9,660.7 957.6,659.7 959.4,657.2 961.1,652.7 962.8,647.4 964.6,642.1 966.3,637.2 968.1,633.0 969.8,629.6 971.6,627.2 973.3,625.6 975.1,625.0 976.8,625.1 978.6,626.0 980.3,627.4 982.1,628.2 983.8,628.6 985.6,629.1 987.3,628.5 989.1,627.5 990.8,626.5 992.5,625.8 994.3,625.4 996.0,625.6 997.8,626.3 999.5,627.5 1001.3,629.1 1003.0,631.2 1004.8,633.6 1006.5,636.3 1008.3,639.2 1010.0,642.3 1011.8,645.6 1013.5,648.9 1015.3,652.2 1017.0,655.6 1018.8,658.9 1020.5,662.2 1022.2,665.3 1024.0,668.5 1025.7,671.5 1027.5,674.3 1029.2,677.1 1031.0,679.8 1032.7,682.3 1034.5,684.7 1036.2,687.0 1038.0,687.9 1039.7,686.8 1041.5,684.4 1043.2,681.6 1045.0,678.7 1046.7,675.9 1048.5,672.3 1050.2,667.2 1051.9,661.6 1053.7,654.8 1055.4,647.7 1057.2,641.1 1058.9,635.3 1060.7,630.4 1062.4,626.6 1064.2,623.9 1065.9,622.2 1067.7,621.5 1069.4,621.7 1071.2,622.6 1072.9,624.2 1074.7,625.1 1076.4,625.7 1078.1,625.0 1079.9,623.9 1081.6,622.7 1083.4,621.8 1085.1,621.3 1086.9,621.3 1088.6,620.6 1090.4,618.6 1092.1,615.9 1093.9,613.4 1095.6,611.2 1097.4,609.6 1099.1,608.7 1100.9,607.4 1102.6,604.8 1104.4,601.9 1106.1,599.1 1107.8,596.9 1109.6,595.5 1111.3,594.8 1113.1,595.0 1114.8,596.0 1116.6,597.7 1118.3,600.1 1120.1,603.0 1121.8,606.3 1123.6,610.1 1125.3,614.1 1127.1,618.4 1128.8,622.7 1130.6,626.0 1132.3,627.3 1134.1,627.5" stroke="#38c838" stroke-width="1.0" fill="none"/>
<polyline points="87.6,649.6 89.3,654.1 91.1,658.4 92.8,662.5 94.6,666.3 96.3,669.9 98.1,673.3 99.8,676.5 101.6,679.5 103.3,682.3 105.1,684.9 106.8,687.4 108.6,689.7 110.3,685.6 112.1,682.8 113.8,674.9 115.6,669.2 117.3,665.3 119.0,656.6 120.8,644.4 122.5,635.7 124.3,629.8 126.0,620.0 127.8,613.5 129.5,609.6 131.3,607.8 133.0,607.7 134.8,608.8 136.5,611.0 138.3,614.0 140.0,617.5 141.8,621.4 143.5,625.6 145.3,630.0 147.0,634.4 148.7,638.9 150.5,643.3 152.2,647.6 154.0,645.6 155.7,644.9 157.5,645.2 159.2,646.3 161.0,648.0 162.7,650.1 164.5,652.6 166.2,655.3 168.0,652.0 169.7,650.1 171.5,649.5 173.2,649.8 174.9,650.8 176.7,652.4 178.4,654.4 180.2,650.5 181.9,648.3 183.7,647.3 185.4,647.4 187.2,642.1 188.9,632.7 190.7,626.3 192.4,622.3 194.2,620.3 195.9,619.9 197.7,620.7 199.4,622.4 201.2,624.9 202.9,628.0 204.6,631.4 206.4,635.1 208.1,638.9 209.9,642.9 211.6,646.8 213.4,650.8 215.1,654.6 216.9,658.4 218.6,655.9 220.4,654.6 222.1,654.4 223.9,654.9 225.6,656.1 227.4,651.6 229.1,648.8 230.9,647.4 232.6,647.2 234.3,641.6 236.1,638.1 237.8,636.4 239.6,635.9 241.3,636.5 243.1,637.9 244.8,640.0 246.6,642.5 248.3,645.4 250.1,648.4 251.8,651.7 253.6,655.0 255.3,658.3 257.1,661.6 258.8,664.9 260.6,668.0 262.3,671.1 264.0,674.1 265.8,676.9 267.5,679.7 269.3,682.2 271.0,684.7 272.8,687.0 274.5,689.2 276.3,691.3 278.0,693.2 279.8,695.1 281.5,696.8 283.3,698.4 285.0,699.9 286.8,701.3 288.5,702.6 290.3,703.8 292.0,705.0 293.7,706.0 295.5,707.0 297.2,707.9 299.0,708.8 300.7,709.6 302.5,704.1 304.2,700.1 306.0,697.1 307.7,695.0 309.5,693.7 311.2,692.9 313.0,692.6 314.7,692.7 316.5,693.1 318.2,693.7 320.0,694.4 321.7,695.3 323.4,696.3 325.2,697.4 326.9,698.4 328.7,693.3 330.4,683.4 332.2,676.1 333.9,670.8 335.7,667.3 337.4,665.1 339.2,664.0 340.9,663.8 342.7,664.2 344.4,659.0 346.2,655.7 347.9,653.7 349.6,653.0 351.4,653.2 353.1,654.1 354.9,655.5 356.6,657.4 358.4,659.6 360.1,662.0 361.9,664.5 363.6,667.1 365.4,669.8 367.1,672.4 368.9,675.0 370.6,671.4 372.4,669.1 374.1,667.9 375.9,667.5 377.6,667.8 379.3,668.7 381.1,669.9 382.8,671.4 384.6,673.2 386.3,675.1 388.1,670.9 389.8,668.2 391.6,666.6 393.3,666.0 395.1,660.0 396.8,655.9 398.6,653.5 400.3,652.3 402.1,652.1 403.8,652.8 405.6,654.1 407.3,655.8 409.0,657.9 410.8,660.3 412.5,662.8 414.3,665.4 416.0,668.1 417.8,670.8 419.5,673.5 421.3,676.1 423.0,678.6 424.8,681.1 426.5,683.5 428.3,685.7 430.0,687.9 431.8,690.0 433.5,691.9 435.3,693.8 437.0,695.5 438.7,697.2 440.5,698.7 442.2,700.2 444.0,701.5 445.7,702.8 447.5,704.0 449.2,705.1 451.0,706.2 452.7,707.1 454.5,708.0 456.2,708.9 458.0,709.7 459.7,710.4 461.5,711.1 463.2,711.7 465.0,712.3 466.7,712.9 468.4,713.4 470.2,713.8 471.9,714.3 473.7,714.7 475.4,708.9 477.2,704.4 478.9,701.1 480.7,698.8 482.4,690.9 484.2,685.2 485.9,681.0 487.7,678.2 489.4,676.5 491.2,675.6 492.9,675.5 494.7,675.8 496.4,676.6 498.1,677.8 499.9,679.1 501.6,680.6 503.4,682.3 505.1,684.0 506.9,685.7 508.6,687.5 510.4,689.2 512.1,691.0 513.9,692.6 515.6,694.3 517.4,695.8 519.1,697.3 520.9,698.8 522.6,700.1 524.4,701.4 526.1,702.6 527.8,703.8 529.6,704.9 531.3,705.9 533.1,700.6 534.8,696.8 536.6,694.0 538.3,692.1 540.1,690.9 541.8,690.4 543.6,690.2 545.3,684.3 547.1,680.0 548.8,677.2 550.6,675.4 552.3,674.5 554.0,674.3 555.8,674.7 557.5,675.5 559.3,676.7 561.0,678.1 562.8,679.6 564.5,681.3 566.3,683.1 568.0,684.9 569.8,686.7 571.5,688.5 573.3,690.2 575.0,691.9 576.8,687.4 578.5,684.2 580.3,682.1 582.0,680.9 583.7,680.4 585.5,680.5 587.2,681.0 589.0,681.8 590.7,682.9 592.5,684.2 594.2,685.6 596.0,687.1 597.7,688.6 599.5,690.2 601.2,691.7 603.0,693.3 604.7,694.8 606.5,690.0 608.2,686.7 610.0,684.4 611.7,683.1 613.4,682.4 615.2,682.3 616.9,682.7 618.7,683.4 620.4,678.2 622.2,674.6 623.9,672.2 625.7,671.0 627.4,670.5 629.2,670.7 630.9,671.5 632.7,666.4 634.4,663.0 636.2,661.0 637.9,660.2 639.7,660.1 641.4,660.8 643.1,662.0 644.9,663.6 646.6,665.5 648.4,667.6 650.1,669.8 651.9,672.2 653.6,674.5 655.4,676.9 657.1,679.2 658.9,681.5 660.6,683.8 662.4,685.9 664.1,681.8 665.9,679.0 667.6,677.3 669.4,676.5 671.1,676.3 672.8,676.6 674.6,677.4 676.3,678.5 678.1,679.8 679.8,681.3 681.6,682.9 683.3,684.6 685.1,686.3 686.8,688.0 688.6,683.6 690.3,680.5 692.1,678.5 693.8,677.4 695.6,670.9 697.3,666.3 699.1,663.3 700.8,661.6 702.5,654.8 704.3,650.1 706.0,647.3 707.8,645.9 709.5,645.7 711.3,646.3 713.0,647.7 714.8,649.5 716.5,651.8 718.3,654.4 720.0,657.1 721.8,660.0 723.5,662.9 725.3,665.9 727.0,668.8 728.7,671.6 730.5,674.4 732.2,677.2 734.0,679.8 735.7,682.3 737.5,684.7 739.2,686.9 741.0,689.1 742.7,684.9 744.5,682.1 746.2,680.3 748.0,673.1 749.7,668.0 751.5,664.6 753.2,662.6 755.0,661.7 756.7,661.6 758.4,662.2 760.2,663.3 761.9,664.9 763.7,666.7 765.4,668.7 767.2,670.9 768.9,667.0 770.7,664.5 772.4,657.0 774.2,651.8 775.9,648.6 777.7,640.6 779.4,629.1 781.2,621.1 782.9,616.0 784.7,613.1 786.4,612.1 788.1,612.6 789.9,614.1 791.6,616.6 793.4,619.6 795.1,623.2 796.9,627.1 798.6,631.2 800.4,635.4 802.1,639.7 803.9,637.8 805.6,637.2 807.4,637.7 809.1,639.0 810.9,640.9 812.6,643.4 814.4,646.1 816.1,649.2 817.8,652.3 819.6,649.4 821.3,647.9 823.1,647.5 824.8,648.1 826.6,643.1 828.3,640.1 830.1,638.7 831.8,638.5 833.6,639.2 835.3,634.5 837.1,631.8 838.8,630.7 840.6,630.9 842.3,632.0 844.1,633.9 845.8,636.4 847.5,639.2 849.3,642.4 851.0,645.8 852.8,649.3 854.5,646.6 856.3,645.3 858.0,645.2 859.8,646.0 861.5,647.4 863.3,643.1 865.0,640.7 866.8,639.7 868.5,639.8 870.3,640.8 872.0,642.5 873.8,638.5 875.5,636.3 877.2,635.5 879.0,635.8 880.7,637.1 882.5,639.0 884.2,641.4 886.0,644.2 887.7,647.2 889.5,650.5 891.2,653.8 893.0,657.1 894.7,660.5 896.5,663.7 898.2,667.0 900.0,670.1 901.7,673.1 903.4,676.0 905.2,678.8 906.9,681.4 908.7,683.9 910.4,686.3 912.2,688.5 913.9,690.6 915.7,692.6 917.4,694.5 919.2,696.2 920.9,697.9 922.7,693.2 924.4,689.9 926.2,687.6 927.9,686.2 929.7,685.4 931.4,685.3 933.1,685.5 934.9,679.9 936.6,676.0 938.4,673.4 940.1,671.9 941.9,665.1 943.6,660.4 945.4,657.3 947.1,655.7 948.9,655.1 950.6,655.4 952.4,656.4 954.1,657.9 955.9,659.7 957.6,655.7 959.4,647.0 961.1,634.9 962.8,626.4 964.6,620.8 966.3,617.5 968.1,616.1 969.8,616.2 971.6,617.4 973.3,619.6 975.1,622.4 976.8,625.7 978.6,629.4 980.3,633.3 982.1,631.1 983.8,630.5 985.6,631.0 987.3,626.2 989.1,623.5 990.8,622.5 992.5,622.8 994.3,624.1 996.0,626.3 997.8,629.1 999.5,632.2 1001.3,635.7 1003.0,639.4 1004.8,643.3 1006.5,647.1 1008.3,651.0 1010.0,654.8 1011.8,658.5 1013.5,662.1 1015.3,665.6 1017.0,669.0 1018.8,672.2 1020.5,675.2 1022.2,678.1 1024.0,680.9 1025.7,683.5 1027.5,685.9 1029.2,688.2 1031.0,690.4 1032.7,692.4 1034.5,694.3 1036.2,696.1 1038.0,691.6 1039.7,682.2 1041.5,675.2 1043.2,670.3 1045.0,667.0 1046.7,665.0 1048.5,657.9 1050.2,646.8 1051.9,638.9 1053.7,627.5 1055.4,619.6 1057.2,614.6 1058.9,611.8 1060.7,610.9 1062.4,611.4 1064.2,613.1 1065.9,615.6 1067.7,618.7 1069.4,622.3 1071.2,626.3 1072.9,630.4 1074.7,628.5 1076.4,628.1 1078.1,622.6 1079.9,619.3 1081.6,618.0 1083.4,618.1 1085.1,619.3 1086.9,621.4 1088.6,618.0 1090.4,610.3 1092.1,605.5 1093.9,603.0 1095.6,602.4 1097.4,603.3 1099.1,605.3 1100.9,602.0 1102.6,594.6 1104.4,590.1 1106.1,588.2 1107.8,588.1 1109.6,589.6 1111.3,592.2 1113.1,595.7 1114.8,599.9 1116.6,604.5 1118.3,609.5 1120.1,614.6 1121.8,619.8 1123.6,625.1 1125.3,630.2 1127.1,635.3 1128.8,640.3 1130.6,638.8 1132.3,632.5 1134.1,628.5" stroke="#ffffff" stroke-width="1.0" fill="none"/>
 </svg>

 <!-- bottom toolbar -->
 <div class="tb" style="left:32px;width:66px">恢复默认</div>
 <div class="tb ser" style="left:97px;width:46px">MA</div>
 <div class="tb ser" style="left:142px;width:46px">EMA</div>
 <div class="tb ser red" style="left:187px;width:46px">MACD</div>
 <div class="tb ser red" style="left:232px;width:46px">BOLL</div>
 <div class="tb" style="left:277px;width:62px">无指标</div>
 <div class="tb" style="left:338px;width:66px">参数设置</div>
 <div class="tb" style="left:403px;width:484px"></div>

 <svg style="left:886px;top:733px" width="258" height="25" viewBox="886 734 258 25">
  <g fill="none" stroke="#e6e640" stroke-width="1">
   <rect x="886.5" y="735.5" width="23" height="23"/><rect x="909.5" y="735.5" width="23" height="23"/><rect x="932.5" y="735.5" width="23" height="23"/><rect x="955.5" y="735.5" width="23" height="23"/><rect x="978.5" y="735.5" width="23" height="23"/><rect x="1001.5" y="735.5" width="23" height="23"/><rect x="1024.5" y="735.5" width="23" height="23"/><rect x="1070.5" y="735.5" width="23" height="23"/>
  </g>
  <rect x="1047.5" y="734.5" width="23" height="24" fill="none" stroke="#e8e8b0"/>
  <rect x="1093.5" y="735.5" width="49" height="23" fill="#ff0000" stroke="#e6e640"/>
  <!-- magnifier -->
  <defs><radialGradient id="mg" cx="40%" cy="35%" r="70%"><stop offset="0" stop-color="#ffffff"/><stop offset=".6" stop-color="#cfe2f4"/><stop offset="1" stop-color="#8fb0d0"/></radialGradient></defs>
  <path d="M902 750l5.5 6" stroke="#b0b0b0" stroke-width="3" stroke-linecap="round"/>
  <circle cx="897" cy="745" r="6.8" fill="url(#mg)" stroke="#c8d4e0" stroke-width="1.2"/>
  <!-- undo arrow -->
  <path d="M913 745l8-7v4.5c6 0 9 4 8.5 11c-1.5-4-4-5.500-8.500-5.5v4.500z" fill="#f4f4f4" stroke="#b0b0b0" stroke-width=".6"/>
  <g stroke="#f0f020" stroke-width="3" fill="none">
   <path d="M937 740l15 13"/>
   <path d="M958 741l12 12M964 739l13 11"/>
   <rect x="982.5" y="741" width="15" height="11.500"/>
   <ellipse cx="1013" cy="747" rx="8" ry="5.5"/>
   <path d="M1029.5 740v14M1038 740v14M1043 740v14"/>
   <path d="M1052 740h14M1052 749h14M1052 754.500h14"/>
   <path d="M1076 740l12 14M1088 740l-12 14"/>
  </g>
 </svg>
</div>
</body>
</html>
